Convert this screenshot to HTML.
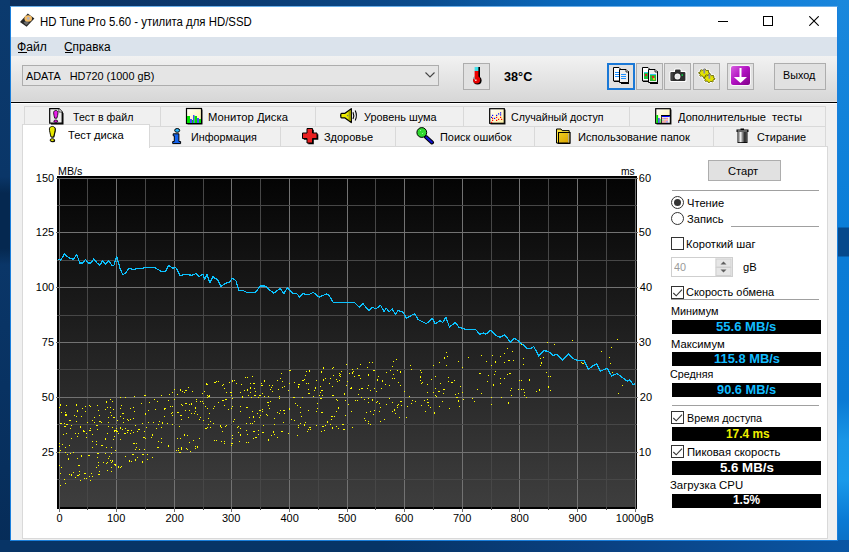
<!DOCTYPE html>
<html><head><meta charset="utf-8">
<style>
*{margin:0;padding:0;box-sizing:border-box}
html,body{width:849px;height:552px;overflow:hidden}
body{position:relative;font-family:"Liberation Sans",sans-serif;font-size:12px;color:#000;background:#073a72}
.a{position:absolute}
.win{position:absolute;left:10px;top:6px;width:828px;height:535px;background:#f0f0f0;border:1px solid #1a7fdc;border-top-color:#6aaee8}
.title{position:absolute;left:11px;top:7px;width:826px;height:30px;background:#fff}
.menu{position:absolute;left:11px;top:37px;width:826px;height:19px;background:#dbe3ec}
.tool{position:absolute;left:11px;top:56px;width:826px;height:46px;background:linear-gradient(#f2f2f2,#d6d6d6)}
.t11{position:absolute;font-size:11px;line-height:13px;white-space:nowrap}
.t12{position:absolute;font-size:12px;line-height:14px;white-space:nowrap}
.btn{position:absolute;background:#e1e1e1;border:1px solid #adadad}
.yl{position:absolute;left:20px;width:34px;text-align:right;font-size:11px;line-height:13px}
.yr{position:absolute;left:640px;font-size:11px;line-height:13px}
.xl{position:absolute;top:511px;width:60px;text-align:center;font-size:11px;line-height:13px}
.tab{position:absolute;background:#f0f0f0;border:1px solid #d9d9d9;font-size:12px;line-height:14px;white-space:nowrap}
.box{position:absolute;left:672px;width:149px;height:14px;background:#000;color:#0ac0ff;font-weight:bold;font-size:12px;line-height:14px;text-align:center}
.cb{position:absolute;left:671px;width:13px;height:13px;border:1px solid #333;background:#fff}
.sep{position:absolute;height:1px;background:#a0a0a0}
.tx{position:absolute;line-height:14px;white-space:nowrap;transform-origin:0 0}
</style></head><body>
<div class="a" style="left:0;top:0;width:849px;height:7px;background:linear-gradient(90deg,#0a2e5c 0%,#0b3c74 30%,#0b4c8e 50%,#0a66b8 65%,#0a78d4 80%,#1a86dc 100%)"></div>
<div class="a" style="left:0;top:0;width:10px;height:552px;background:linear-gradient(180deg,#0b3a6e 0%,#0a3668 32%,#052850 35%,#052850 45%,#0a3668 48%,#083262 70%,#062c58 100%)"></div>
<div class="a" style="left:837px;top:0;width:12px;height:552px;background:linear-gradient(180deg,#1a88dc 0px,#0a7ed8 227px,#05498c 228px,#05498c 256px,#0a7cd6 257px,#0a7ad4 400px,#1a96e6 440px,#1a9aea 480px,#0a7ad4 520px,#0a6cc0 552px)"></div>
<div class="a" style="left:0;top:540px;width:849px;height:12px;background:linear-gradient(90deg,#083466 0%,#063466 45%,#0a4080 70%,#0a56a4 100%)"></div>
<div class="win"></div>
<div class="title"></div>
<!-- caption buttons -->
<div class="a" style="left:718px;top:21px;width:10px;height:1px;background:#000"></div>
<div class="a" style="left:763px;top:16px;width:10px;height:10px;border:1px solid #000"></div>
<svg class="a" style="left:809px;top:16px" width="10" height="10" viewBox="0 0 10 10"><path d="M0.3 0.3 L9.7 9.7 M9.7 0.3 L0.3 9.7" stroke="#000" stroke-width="1.1"/></svg>

<div class="menu"></div>
<div class="a" style="left:18px;top:52px;width:9px;height:1px;background:#000"></div>
<div class="a" style="left:65px;top:52px;width:8px;height:1px;background:#000"></div>

<div class="tool"></div>
<!-- combo -->
<div class="a" style="left:22px;top:65px;width:417px;height:21px;background:#e5e5e5;border:1px solid #adadad"></div>
<svg class="a" style="left:425px;top:72px" width="10" height="6" viewBox="0 0 10 6"><path d="M0.5 0.5 L5 5 L9.5 0.5" fill="none" stroke="#444" stroke-width="1.1"/></svg>
<!-- thermometer -->
<div class="btn" style="left:463px;top:63px;width:27px;height:27px"></div>
<!-- toolbar buttons -->
<div class="btn" style="left:607px;top:63px;width:28px;height:27px;border:2px solid #1a78d6"></div>
<div class="btn" style="left:636px;top:63px;width:27px;height:27px"></div>
<div class="btn" style="left:664px;top:63px;width:27px;height:27px"></div>
<div class="btn" style="left:693px;top:63px;width:27px;height:27px"></div>
<div class="btn" style="left:727px;top:63px;width:27px;height:27px"></div>
<div class="btn" style="left:774px;top:63px;width:52px;height:27px"></div>

<div class="a" style="left:11px;top:101px;width:826px;height:1px;background:#e3e3e3"></div>
<div class="a" style="left:11px;top:102px;width:826px;height:1px;background:#000"></div>
<div class="a" style="left:11px;top:103px;width:826px;height:1px;background:#fff"></div>

<!-- tabs upper row -->
<div class="tab" style="left:24px;top:106px;width:137px;height:21px"></div>
<div class="tab" style="left:160px;top:106px;width:156px;height:21px"></div>
<div class="tab" style="left:315px;top:106px;width:149px;height:21px"></div>
<div class="tab" style="left:463px;top:106px;width:167px;height:21px"></div>
<div class="tab" style="left:629px;top:106px;width:197px;height:21px"></div>
<!-- tabs lower row -->
<div class="tab" style="left:149px;top:126px;width:132px;height:21px"></div>
<div class="tab" style="left:280px;top:126px;width:116px;height:21px"></div>
<div class="tab" style="left:395px;top:126px;width:140px;height:21px"></div>
<div class="tab" style="left:534px;top:126px;width:180px;height:21px"></div>
<div class="tab" style="left:713px;top:126px;width:113px;height:21px"></div>
<!-- panel -->
<div class="a" style="left:22px;top:146px;width:806px;height:393px;background:#fff;border:1px solid #d9d9d9"></div>
<div class="a" style="left:22px;top:124px;width:128px;height:24px;background:#fff;border:1px solid #d9d9d9;border-bottom:none"></div>

<svg class="chart" width="849" height="552" viewBox="0 0 849 552" style="position:absolute;left:0;top:0" shape-rendering="crispEdges">
<defs><linearGradient id="gbg" x1="0" y1="0" x2="0" y2="1"><stop offset="0" stop-color="#040404"/><stop offset="1" stop-color="#3e3e3e"/></linearGradient></defs>
<rect x="57" y="176" width="580" height="333" fill="#000"/>
<rect x="59" y="178" width="576" height="329" fill="url(#gbg)"/>
<rect x="59" y="178" width="1" height="334" fill="#727272"/>
<rect x="87" y="178" width="1" height="332" fill="#474747"/>
<rect x="116" y="178" width="1" height="334" fill="#727272"/>
<rect x="145" y="178" width="1" height="332" fill="#474747"/>
<rect x="174" y="178" width="1" height="334" fill="#727272"/>
<rect x="203" y="178" width="1" height="332" fill="#474747"/>
<rect x="231" y="178" width="1" height="334" fill="#727272"/>
<rect x="260" y="178" width="1" height="332" fill="#474747"/>
<rect x="289" y="178" width="1" height="334" fill="#727272"/>
<rect x="318" y="178" width="1" height="332" fill="#474747"/>
<rect x="347" y="178" width="1" height="334" fill="#727272"/>
<rect x="375" y="178" width="1" height="332" fill="#474747"/>
<rect x="404" y="178" width="1" height="334" fill="#727272"/>
<rect x="433" y="178" width="1" height="332" fill="#474747"/>
<rect x="462" y="178" width="1" height="334" fill="#727272"/>
<rect x="491" y="178" width="1" height="332" fill="#474747"/>
<rect x="519" y="178" width="1" height="334" fill="#727272"/>
<rect x="548" y="178" width="1" height="332" fill="#474747"/>
<rect x="577" y="178" width="1" height="334" fill="#727272"/>
<rect x="606" y="178" width="1" height="332" fill="#474747"/>
<rect x="635" y="178" width="1" height="334" fill="#727272"/>
<rect x="56" y="178" width="582" height="1" fill="#727272"/>
<rect x="57" y="205" width="580" height="1" fill="#474747"/>
<rect x="56" y="232" width="582" height="1" fill="#727272"/>
<rect x="57" y="260" width="580" height="1" fill="#474747"/>
<rect x="56" y="287" width="582" height="1" fill="#727272"/>
<rect x="57" y="315" width="580" height="1" fill="#474747"/>
<rect x="56" y="342" width="582" height="1" fill="#727272"/>
<rect x="57" y="369" width="580" height="1" fill="#474747"/>
<rect x="56" y="397" width="582" height="1" fill="#727272"/>
<rect x="57" y="424" width="580" height="1" fill="#474747"/>
<rect x="56" y="452" width="582" height="1" fill="#727272"/>
<rect x="57" y="479" width="580" height="1" fill="#474747"/>
<rect x="74" y="415" width="1" height="1" fill="#ffff00"/>
<rect x="90" y="406" width="1" height="1" fill="#ffff00"/>
<rect x="84" y="431" width="1" height="1" fill="#ffff00"/>
<rect x="60" y="450" width="1" height="1" fill="#ffff00"/>
<rect x="59" y="443" width="1" height="1" fill="#ffff00"/>
<rect x="61" y="412" width="1" height="1" fill="#ffff00"/>
<rect x="79" y="471" width="1" height="1" fill="#ffff00"/>
<rect x="64" y="423" width="1" height="1" fill="#ffff00"/>
<rect x="89" y="476" width="1" height="1" fill="#ffff00"/>
<rect x="86" y="433" width="1" height="1" fill="#ffff00"/>
<rect x="106" y="401" width="1" height="2" fill="#ffff00"/>
<rect x="100" y="421" width="1" height="1" fill="#ffff00"/>
<rect x="65" y="414" width="1" height="2" fill="#ffff00"/>
<rect x="73" y="472" width="1" height="1" fill="#ffff00"/>
<rect x="67" y="454" width="1" height="1" fill="#ffff00"/>
<rect x="89" y="430" width="2" height="1" fill="#ffff00"/>
<rect x="85" y="406" width="1" height="1" fill="#ffff00"/>
<rect x="60" y="423" width="1" height="1" fill="#ffff00"/>
<rect x="92" y="434" width="1" height="1" fill="#ffff00"/>
<rect x="73" y="452" width="1" height="1" fill="#ffff00"/>
<rect x="80" y="426" width="1" height="2" fill="#ffff00"/>
<rect x="97" y="453" width="2" height="1" fill="#ffff00"/>
<rect x="70" y="453" width="1" height="1" fill="#ffff00"/>
<rect x="84" y="473" width="2" height="1" fill="#ffff00"/>
<rect x="94" y="422" width="1" height="1" fill="#ffff00"/>
<rect x="107" y="407" width="1" height="1" fill="#ffff00"/>
<rect x="78" y="465" width="2" height="1" fill="#ffff00"/>
<rect x="65" y="447" width="1" height="1" fill="#ffff00"/>
<rect x="59" y="465" width="1" height="1" fill="#ffff00"/>
<rect x="96" y="444" width="1" height="1" fill="#ffff00"/>
<rect x="101" y="422" width="1" height="1" fill="#ffff00"/>
<rect x="92" y="447" width="1" height="1" fill="#ffff00"/>
<rect x="86" y="437" width="1" height="1" fill="#ffff00"/>
<rect x="99" y="471" width="1" height="1" fill="#ffff00"/>
<rect x="81" y="456" width="1" height="1" fill="#ffff00"/>
<rect x="61" y="467" width="1" height="1" fill="#ffff00"/>
<rect x="90" y="480" width="1" height="1" fill="#ffff00"/>
<rect x="99" y="421" width="1" height="1" fill="#ffff00"/>
<rect x="77" y="458" width="1" height="1" fill="#ffff00"/>
<rect x="59" y="446" width="1" height="1" fill="#ffff00"/>
<rect x="66" y="414" width="1" height="1" fill="#ffff00"/>
<rect x="60" y="473" width="1" height="1" fill="#ffff00"/>
<rect x="64" y="426" width="1" height="1" fill="#ffff00"/>
<rect x="77" y="475" width="2" height="1" fill="#ffff00"/>
<rect x="62" y="444" width="1" height="1" fill="#ffff00"/>
<rect x="85" y="473" width="1" height="1" fill="#ffff00"/>
<rect x="98" y="465" width="1" height="1" fill="#ffff00"/>
<rect x="71" y="438" width="1" height="1" fill="#ffff00"/>
<rect x="75" y="477" width="1" height="1" fill="#ffff00"/>
<rect x="105" y="409" width="1" height="1" fill="#ffff00"/>
<rect x="66" y="424" width="2" height="1" fill="#ffff00"/>
<rect x="69" y="445" width="1" height="1" fill="#ffff00"/>
<rect x="87" y="422" width="1" height="1" fill="#ffff00"/>
<rect x="78" y="433" width="1" height="1" fill="#ffff00"/>
<rect x="86" y="478" width="1" height="1" fill="#ffff00"/>
<rect x="92" y="441" width="1" height="1" fill="#ffff00"/>
<rect x="88" y="455" width="2" height="1" fill="#ffff00"/>
<rect x="60" y="485" width="1" height="1" fill="#ffff00"/>
<rect x="96" y="467" width="1" height="1" fill="#ffff00"/>
<rect x="97" y="429" width="1" height="1" fill="#ffff00"/>
<rect x="77" y="410" width="1" height="2" fill="#ffff00"/>
<rect x="89" y="405" width="1" height="1" fill="#ffff00"/>
<rect x="61" y="423" width="1" height="1" fill="#ffff00"/>
<rect x="66" y="433" width="1" height="1" fill="#ffff00"/>
<rect x="60" y="404" width="1" height="2" fill="#ffff00"/>
<rect x="65" y="412" width="1" height="1" fill="#ffff00"/>
<rect x="76" y="404" width="1" height="2" fill="#ffff00"/>
<rect x="101" y="445" width="2" height="1" fill="#ffff00"/>
<rect x="65" y="426" width="1" height="1" fill="#ffff00"/>
<rect x="75" y="433" width="1" height="1" fill="#ffff00"/>
<rect x="64" y="479" width="1" height="1" fill="#ffff00"/>
<rect x="107" y="433" width="1" height="1" fill="#ffff00"/>
<rect x="82" y="408" width="1" height="1" fill="#ffff00"/>
<rect x="63" y="434" width="1" height="1" fill="#ffff00"/>
<rect x="71" y="474" width="1" height="2" fill="#ffff00"/>
<rect x="66" y="405" width="1" height="1" fill="#ffff00"/>
<rect x="105" y="438" width="1" height="2" fill="#ffff00"/>
<rect x="65" y="452" width="1" height="1" fill="#ffff00"/>
<rect x="59" y="452" width="1" height="1" fill="#ffff00"/>
<rect x="106" y="463" width="1" height="1" fill="#ffff00"/>
<rect x="92" y="420" width="1" height="1" fill="#ffff00"/>
<rect x="76" y="416" width="1" height="1" fill="#ffff00"/>
<rect x="96" y="441" width="1" height="1" fill="#ffff00"/>
<rect x="96" y="425" width="1" height="1" fill="#ffff00"/>
<rect x="69" y="474" width="1" height="1" fill="#ffff00"/>
<rect x="107" y="462" width="1" height="1" fill="#ffff00"/>
<rect x="98" y="462" width="1" height="1" fill="#ffff00"/>
<rect x="94" y="417" width="1" height="1" fill="#ffff00"/>
<rect x="83" y="430" width="1" height="2" fill="#ffff00"/>
<rect x="59" y="407" width="1" height="1" fill="#ffff00"/>
<rect x="71" y="425" width="1" height="1" fill="#ffff00"/>
<rect x="92" y="476" width="1" height="1" fill="#ffff00"/>
<rect x="80" y="480" width="1" height="1" fill="#ffff00"/>
<rect x="107" y="470" width="1" height="1" fill="#ffff00"/>
<rect x="76" y="421" width="1" height="1" fill="#ffff00"/>
<rect x="69" y="420" width="2" height="1" fill="#ffff00"/>
<rect x="68" y="458" width="1" height="2" fill="#ffff00"/>
<rect x="103" y="462" width="1" height="1" fill="#ffff00"/>
<rect x="81" y="455" width="1" height="1" fill="#ffff00"/>
<rect x="97" y="405" width="1" height="1" fill="#ffff00"/>
<rect x="91" y="473" width="1" height="1" fill="#ffff00"/>
<rect x="97" y="457" width="1" height="1" fill="#ffff00"/>
<rect x="81" y="416" width="1" height="1" fill="#ffff00"/>
<rect x="97" y="425" width="1" height="1" fill="#ffff00"/>
<rect x="98" y="474" width="1" height="1" fill="#ffff00"/>
<rect x="77" y="436" width="1" height="1" fill="#ffff00"/>
<rect x="105" y="453" width="1" height="1" fill="#ffff00"/>
<rect x="66" y="414" width="1" height="2" fill="#ffff00"/>
<rect x="65" y="483" width="1" height="1" fill="#ffff00"/>
<rect x="98" y="410" width="1" height="1" fill="#ffff00"/>
<rect x="99" y="474" width="1" height="1" fill="#ffff00"/>
<rect x="90" y="428" width="1" height="1" fill="#ffff00"/>
<rect x="85" y="411" width="1" height="1" fill="#ffff00"/>
<rect x="106" y="447" width="1" height="1" fill="#ffff00"/>
<rect x="84" y="478" width="1" height="1" fill="#ffff00"/>
<rect x="79" y="474" width="1" height="1" fill="#ffff00"/>
<rect x="99" y="415" width="1" height="1" fill="#ffff00"/>
<rect x="70" y="428" width="1" height="1" fill="#ffff00"/>
<rect x="120" y="439" width="1" height="1" fill="#ffff00"/>
<rect x="120" y="427" width="1" height="2" fill="#ffff00"/>
<rect x="114" y="464" width="2" height="1" fill="#ffff00"/>
<rect x="125" y="428" width="1" height="1" fill="#ffff00"/>
<rect x="137" y="457" width="1" height="1" fill="#ffff00"/>
<rect x="129" y="461" width="1" height="1" fill="#ffff00"/>
<rect x="133" y="432" width="1" height="1" fill="#ffff00"/>
<rect x="134" y="396" width="1" height="1" fill="#ffff00"/>
<rect x="130" y="408" width="1" height="1" fill="#ffff00"/>
<rect x="108" y="458" width="1" height="1" fill="#ffff00"/>
<rect x="116" y="431" width="1" height="1" fill="#ffff00"/>
<rect x="144" y="431" width="1" height="1" fill="#ffff00"/>
<rect x="124" y="433" width="2" height="1" fill="#ffff00"/>
<rect x="135" y="449" width="1" height="1" fill="#ffff00"/>
<rect x="113" y="439" width="1" height="1" fill="#ffff00"/>
<rect x="120" y="416" width="1" height="1" fill="#ffff00"/>
<rect x="146" y="427" width="1" height="1" fill="#ffff00"/>
<rect x="136" y="447" width="1" height="1" fill="#ffff00"/>
<rect x="153" y="422" width="1" height="1" fill="#ffff00"/>
<rect x="138" y="429" width="1" height="1" fill="#ffff00"/>
<rect x="133" y="443" width="2" height="1" fill="#ffff00"/>
<rect x="130" y="433" width="1" height="1" fill="#ffff00"/>
<rect x="131" y="461" width="1" height="1" fill="#ffff00"/>
<rect x="142" y="454" width="2" height="1" fill="#ffff00"/>
<rect x="155" y="409" width="1" height="1" fill="#ffff00"/>
<rect x="135" y="460" width="1" height="1" fill="#ffff00"/>
<rect x="149" y="402" width="1" height="1" fill="#ffff00"/>
<rect x="114" y="430" width="1" height="2" fill="#ffff00"/>
<rect x="111" y="415" width="1" height="1" fill="#ffff00"/>
<rect x="111" y="447" width="1" height="1" fill="#ffff00"/>
<rect x="147" y="454" width="1" height="1" fill="#ffff00"/>
<rect x="115" y="450" width="1" height="1" fill="#ffff00"/>
<rect x="141" y="403" width="1" height="1" fill="#ffff00"/>
<rect x="152" y="457" width="1" height="1" fill="#ffff00"/>
<rect x="118" y="466" width="1" height="2" fill="#ffff00"/>
<rect x="127" y="430" width="2" height="1" fill="#ffff00"/>
<rect x="157" y="447" width="2" height="1" fill="#ffff00"/>
<rect x="116" y="428" width="1" height="1" fill="#ffff00"/>
<rect x="133" y="418" width="1" height="1" fill="#ffff00"/>
<rect x="117" y="420" width="1" height="1" fill="#ffff00"/>
<rect x="144" y="395" width="2" height="1" fill="#ffff00"/>
<rect x="135" y="425" width="1" height="1" fill="#ffff00"/>
<rect x="108" y="422" width="1" height="1" fill="#ffff00"/>
<rect x="139" y="429" width="1" height="1" fill="#ffff00"/>
<rect x="111" y="471" width="1" height="1" fill="#ffff00"/>
<rect x="147" y="459" width="1" height="1" fill="#ffff00"/>
<rect x="113" y="417" width="2" height="1" fill="#ffff00"/>
<rect x="109" y="456" width="1" height="1" fill="#ffff00"/>
<rect x="121" y="405" width="1" height="1" fill="#ffff00"/>
<rect x="129" y="460" width="1" height="1" fill="#ffff00"/>
<rect x="148" y="410" width="1" height="1" fill="#ffff00"/>
<rect x="115" y="465" width="1" height="1" fill="#ffff00"/>
<rect x="136" y="443" width="1" height="1" fill="#ffff00"/>
<rect x="112" y="401" width="1" height="1" fill="#ffff00"/>
<rect x="142" y="423" width="1" height="1" fill="#ffff00"/>
<rect x="111" y="467" width="1" height="1" fill="#ffff00"/>
<rect x="139" y="449" width="1" height="1" fill="#ffff00"/>
<rect x="112" y="461" width="1" height="1" fill="#ffff00"/>
<rect x="111" y="462" width="1" height="1" fill="#ffff00"/>
<rect x="130" y="419" width="1" height="1" fill="#ffff00"/>
<rect x="135" y="459" width="1" height="1" fill="#ffff00"/>
<rect x="121" y="405" width="1" height="1" fill="#ffff00"/>
<rect x="134" y="411" width="1" height="1" fill="#ffff00"/>
<rect x="113" y="409" width="1" height="1" fill="#ffff00"/>
<rect x="110" y="412" width="1" height="1" fill="#ffff00"/>
<rect x="123" y="418" width="1" height="1" fill="#ffff00"/>
<rect x="145" y="413" width="1" height="2" fill="#ffff00"/>
<rect x="133" y="407" width="1" height="1" fill="#ffff00"/>
<rect x="125" y="397" width="1" height="1" fill="#ffff00"/>
<rect x="120" y="397" width="1" height="1" fill="#ffff00"/>
<rect x="144" y="431" width="1" height="1" fill="#ffff00"/>
<rect x="117" y="431" width="1" height="1" fill="#ffff00"/>
<rect x="154" y="399" width="1" height="1" fill="#ffff00"/>
<rect x="148" y="422" width="1" height="1" fill="#ffff00"/>
<rect x="132" y="454" width="1" height="1" fill="#ffff00"/>
<rect x="127" y="432" width="1" height="1" fill="#ffff00"/>
<rect x="142" y="461" width="1" height="2" fill="#ffff00"/>
<rect x="125" y="456" width="1" height="1" fill="#ffff00"/>
<rect x="143" y="437" width="2" height="1" fill="#ffff00"/>
<rect x="128" y="420" width="1" height="1" fill="#ffff00"/>
<rect x="110" y="407" width="1" height="1" fill="#ffff00"/>
<rect x="111" y="453" width="1" height="1" fill="#ffff00"/>
<rect x="120" y="408" width="1" height="1" fill="#ffff00"/>
<rect x="112" y="460" width="1" height="1" fill="#ffff00"/>
<rect x="151" y="437" width="1" height="1" fill="#ffff00"/>
<rect x="122" y="413" width="1" height="1" fill="#ffff00"/>
<rect x="122" y="429" width="1" height="1" fill="#ffff00"/>
<rect x="115" y="430" width="2" height="1" fill="#ffff00"/>
<rect x="121" y="466" width="1" height="1" fill="#ffff00"/>
<rect x="156" y="428" width="1" height="1" fill="#ffff00"/>
<rect x="120" y="467" width="1" height="1" fill="#ffff00"/>
<rect x="123" y="422" width="1" height="1" fill="#ffff00"/>
<rect x="108" y="426" width="1" height="1" fill="#ffff00"/>
<rect x="131" y="430" width="1" height="1" fill="#ffff00"/>
<rect x="118" y="433" width="1" height="1" fill="#ffff00"/>
<rect x="108" y="417" width="1" height="1" fill="#ffff00"/>
<rect x="112" y="427" width="1" height="1" fill="#ffff00"/>
<rect x="110" y="399" width="1" height="1" fill="#ffff00"/>
<rect x="123" y="413" width="1" height="1" fill="#ffff00"/>
<rect x="137" y="431" width="1" height="1" fill="#ffff00"/>
<rect x="145" y="438" width="1" height="1" fill="#ffff00"/>
<rect x="143" y="454" width="1" height="1" fill="#ffff00"/>
<rect x="127" y="419" width="1" height="1" fill="#ffff00"/>
<rect x="157" y="401" width="1" height="1" fill="#ffff00"/>
<rect x="144" y="437" width="1" height="1" fill="#ffff00"/>
<rect x="110" y="460" width="1" height="1" fill="#ffff00"/>
<rect x="152" y="434" width="1" height="2" fill="#ffff00"/>
<rect x="144" y="449" width="1" height="1" fill="#ffff00"/>
<rect x="114" y="436" width="1" height="1" fill="#ffff00"/>
<rect x="133" y="454" width="1" height="1" fill="#ffff00"/>
<rect x="238" y="432" width="1" height="1" fill="#ffff00"/>
<rect x="216" y="440" width="1" height="1" fill="#ffff00"/>
<rect x="226" y="425" width="1" height="1" fill="#ffff00"/>
<rect x="180" y="389" width="1" height="1" fill="#ffff00"/>
<rect x="171" y="413" width="1" height="1" fill="#ffff00"/>
<rect x="168" y="445" width="1" height="1" fill="#ffff00"/>
<rect x="213" y="423" width="1" height="1" fill="#ffff00"/>
<rect x="220" y="426" width="1" height="1" fill="#ffff00"/>
<rect x="206" y="383" width="1" height="1" fill="#ffff00"/>
<rect x="237" y="427" width="1" height="1" fill="#ffff00"/>
<rect x="208" y="418" width="1" height="1" fill="#ffff00"/>
<rect x="223" y="384" width="1" height="1" fill="#ffff00"/>
<rect x="231" y="395" width="1" height="1" fill="#ffff00"/>
<rect x="165" y="408" width="1" height="1" fill="#ffff00"/>
<rect x="230" y="392" width="2" height="1" fill="#ffff00"/>
<rect x="231" y="443" width="2" height="1" fill="#ffff00"/>
<rect x="207" y="408" width="1" height="1" fill="#ffff00"/>
<rect x="205" y="428" width="2" height="1" fill="#ffff00"/>
<rect x="234" y="419" width="1" height="1" fill="#ffff00"/>
<rect x="222" y="385" width="1" height="1" fill="#ffff00"/>
<rect x="172" y="406" width="1" height="1" fill="#ffff00"/>
<rect x="232" y="398" width="1" height="1" fill="#ffff00"/>
<rect x="214" y="382" width="2" height="1" fill="#ffff00"/>
<rect x="164" y="408" width="1" height="2" fill="#ffff00"/>
<rect x="225" y="426" width="1" height="1" fill="#ffff00"/>
<rect x="225" y="399" width="2" height="1" fill="#ffff00"/>
<rect x="209" y="413" width="1" height="1" fill="#ffff00"/>
<rect x="204" y="391" width="1" height="1" fill="#ffff00"/>
<rect x="247" y="389" width="1" height="2" fill="#ffff00"/>
<rect x="255" y="437" width="2" height="1" fill="#ffff00"/>
<rect x="159" y="421" width="1" height="1" fill="#ffff00"/>
<rect x="239" y="441" width="1" height="1" fill="#ffff00"/>
<rect x="202" y="401" width="1" height="1" fill="#ffff00"/>
<rect x="178" y="450" width="1" height="1" fill="#ffff00"/>
<rect x="179" y="426" width="1" height="1" fill="#ffff00"/>
<rect x="172" y="424" width="1" height="1" fill="#ffff00"/>
<rect x="253" y="383" width="1" height="1" fill="#ffff00"/>
<rect x="240" y="411" width="1" height="1" fill="#ffff00"/>
<rect x="246" y="423" width="1" height="1" fill="#ffff00"/>
<rect x="181" y="447" width="1" height="1" fill="#ffff00"/>
<rect x="206" y="384" width="2" height="1" fill="#ffff00"/>
<rect x="158" y="424" width="1" height="1" fill="#ffff00"/>
<rect x="203" y="403" width="1" height="1" fill="#ffff00"/>
<rect x="172" y="412" width="1" height="1" fill="#ffff00"/>
<rect x="189" y="442" width="1" height="1" fill="#ffff00"/>
<rect x="158" y="441" width="1" height="1" fill="#ffff00"/>
<rect x="241" y="384" width="1" height="1" fill="#ffff00"/>
<rect x="250" y="423" width="1" height="1" fill="#ffff00"/>
<rect x="248" y="395" width="1" height="1" fill="#ffff00"/>
<rect x="195" y="411" width="1" height="1" fill="#ffff00"/>
<rect x="257" y="413" width="1" height="1" fill="#ffff00"/>
<rect x="194" y="413" width="1" height="1" fill="#ffff00"/>
<rect x="185" y="390" width="1" height="1" fill="#ffff00"/>
<rect x="168" y="445" width="1" height="2" fill="#ffff00"/>
<rect x="186" y="448" width="1" height="1" fill="#ffff00"/>
<rect x="182" y="405" width="1" height="1" fill="#ffff00"/>
<rect x="209" y="395" width="1" height="2" fill="#ffff00"/>
<rect x="195" y="448" width="1" height="1" fill="#ffff00"/>
<rect x="246" y="430" width="1" height="1" fill="#ffff00"/>
<rect x="221" y="441" width="1" height="1" fill="#ffff00"/>
<rect x="252" y="411" width="1" height="1" fill="#ffff00"/>
<rect x="229" y="382" width="1" height="1" fill="#ffff00"/>
<rect x="231" y="408" width="1" height="1" fill="#ffff00"/>
<rect x="233" y="421" width="1" height="1" fill="#ffff00"/>
<rect x="186" y="390" width="1" height="1" fill="#ffff00"/>
<rect x="250" y="383" width="1" height="1" fill="#ffff00"/>
<rect x="205" y="406" width="1" height="1" fill="#ffff00"/>
<rect x="187" y="435" width="1" height="1" fill="#ffff00"/>
<rect x="255" y="391" width="1" height="1" fill="#ffff00"/>
<rect x="223" y="400" width="1" height="1" fill="#ffff00"/>
<rect x="213" y="408" width="1" height="1" fill="#ffff00"/>
<rect x="174" y="399" width="1" height="1" fill="#ffff00"/>
<rect x="178" y="448" width="1" height="1" fill="#ffff00"/>
<rect x="207" y="397" width="1" height="1" fill="#ffff00"/>
<rect x="248" y="442" width="1" height="1" fill="#ffff00"/>
<rect x="202" y="393" width="1" height="1" fill="#ffff00"/>
<rect x="177" y="394" width="1" height="1" fill="#ffff00"/>
<rect x="192" y="391" width="1" height="1" fill="#ffff00"/>
<rect x="181" y="404" width="1" height="1" fill="#ffff00"/>
<rect x="214" y="440" width="1" height="1" fill="#ffff00"/>
<rect x="232" y="406" width="1" height="1" fill="#ffff00"/>
<rect x="199" y="419" width="1" height="1" fill="#ffff00"/>
<rect x="195" y="407" width="1" height="2" fill="#ffff00"/>
<rect x="164" y="409" width="1" height="1" fill="#ffff00"/>
<rect x="254" y="383" width="1" height="1" fill="#ffff00"/>
<rect x="208" y="424" width="1" height="1" fill="#ffff00"/>
<rect x="244" y="390" width="1" height="1" fill="#ffff00"/>
<rect x="185" y="403" width="2" height="1" fill="#ffff00"/>
<rect x="197" y="414" width="1" height="1" fill="#ffff00"/>
<rect x="253" y="431" width="2" height="1" fill="#ffff00"/>
<rect x="245" y="377" width="1" height="1" fill="#ffff00"/>
<rect x="161" y="438" width="1" height="1" fill="#ffff00"/>
<rect x="247" y="407" width="1" height="1" fill="#ffff00"/>
<rect x="216" y="381" width="1" height="1" fill="#ffff00"/>
<rect x="197" y="446" width="1" height="2" fill="#ffff00"/>
<rect x="240" y="434" width="1" height="2" fill="#ffff00"/>
<rect x="255" y="391" width="1" height="1" fill="#ffff00"/>
<rect x="168" y="400" width="1" height="1" fill="#ffff00"/>
<rect x="210" y="427" width="1" height="1" fill="#ffff00"/>
<rect x="252" y="423" width="1" height="1" fill="#ffff00"/>
<rect x="222" y="431" width="1" height="1" fill="#ffff00"/>
<rect x="203" y="420" width="1" height="1" fill="#ffff00"/>
<rect x="161" y="442" width="1" height="1" fill="#ffff00"/>
<rect x="181" y="448" width="1" height="2" fill="#ffff00"/>
<rect x="222" y="400" width="1" height="1" fill="#ffff00"/>
<rect x="170" y="406" width="1" height="1" fill="#ffff00"/>
<rect x="221" y="427" width="1" height="1" fill="#ffff00"/>
<rect x="169" y="394" width="1" height="1" fill="#ffff00"/>
<rect x="210" y="421" width="1" height="1" fill="#ffff00"/>
<rect x="196" y="399" width="1" height="1" fill="#ffff00"/>
<rect x="218" y="381" width="1" height="1" fill="#ffff00"/>
<rect x="188" y="417" width="1" height="1" fill="#ffff00"/>
<rect x="253" y="417" width="1" height="1" fill="#ffff00"/>
<rect x="246" y="407" width="1" height="1" fill="#ffff00"/>
<rect x="181" y="404" width="1" height="1" fill="#ffff00"/>
<rect x="254" y="421" width="1" height="1" fill="#ffff00"/>
<rect x="188" y="387" width="1" height="1" fill="#ffff00"/>
<rect x="207" y="427" width="1" height="1" fill="#ffff00"/>
<rect x="200" y="401" width="1" height="1" fill="#ffff00"/>
<rect x="224" y="441" width="1" height="1" fill="#ffff00"/>
<rect x="180" y="390" width="1" height="1" fill="#ffff00"/>
<rect x="191" y="413" width="1" height="1" fill="#ffff00"/>
<rect x="226" y="392" width="1" height="1" fill="#ffff00"/>
<rect x="237" y="427" width="1" height="1" fill="#ffff00"/>
<rect x="208" y="396" width="1" height="1" fill="#ffff00"/>
<rect x="254" y="395" width="2" height="1" fill="#ffff00"/>
<rect x="240" y="392" width="1" height="1" fill="#ffff00"/>
<rect x="180" y="438" width="1" height="1" fill="#ffff00"/>
<rect x="187" y="449" width="1" height="1" fill="#ffff00"/>
<rect x="207" y="395" width="1" height="1" fill="#ffff00"/>
<rect x="180" y="415" width="1" height="1" fill="#ffff00"/>
<rect x="224" y="443" width="1" height="1" fill="#ffff00"/>
<rect x="172" y="415" width="1" height="1" fill="#ffff00"/>
<rect x="179" y="452" width="2" height="1" fill="#ffff00"/>
<rect x="172" y="392" width="1" height="1" fill="#ffff00"/>
<rect x="164" y="416" width="1" height="1" fill="#ffff00"/>
<rect x="247" y="434" width="1" height="1" fill="#ffff00"/>
<rect x="231" y="445" width="1" height="1" fill="#ffff00"/>
<rect x="251" y="397" width="1" height="1" fill="#ffff00"/>
<rect x="176" y="450" width="1" height="1" fill="#ffff00"/>
<rect x="232" y="380" width="1" height="2" fill="#ffff00"/>
<rect x="224" y="405" width="1" height="1" fill="#ffff00"/>
<rect x="195" y="407" width="1" height="1" fill="#ffff00"/>
<rect x="174" y="389" width="1" height="1" fill="#ffff00"/>
<rect x="185" y="410" width="1" height="1" fill="#ffff00"/>
<rect x="253" y="383" width="1" height="1" fill="#ffff00"/>
<rect x="254" y="388" width="1" height="1" fill="#ffff00"/>
<rect x="193" y="440" width="1" height="1" fill="#ffff00"/>
<rect x="240" y="406" width="1" height="1" fill="#ffff00"/>
<rect x="162" y="422" width="1" height="2" fill="#ffff00"/>
<rect x="195" y="446" width="1" height="1" fill="#ffff00"/>
<rect x="177" y="412" width="2" height="1" fill="#ffff00"/>
<rect x="247" y="377" width="1" height="1" fill="#ffff00"/>
<rect x="199" y="438" width="1" height="1" fill="#ffff00"/>
<rect x="234" y="380" width="1" height="1" fill="#ffff00"/>
<rect x="161" y="395" width="1" height="1" fill="#ffff00"/>
<rect x="250" y="392" width="1" height="1" fill="#ffff00"/>
<rect x="232" y="438" width="1" height="1" fill="#ffff00"/>
<rect x="191" y="403" width="1" height="2" fill="#ffff00"/>
<rect x="253" y="416" width="1" height="1" fill="#ffff00"/>
<rect x="184" y="434" width="1" height="2" fill="#ffff00"/>
<rect x="189" y="404" width="1" height="1" fill="#ffff00"/>
<rect x="158" y="441" width="1" height="1" fill="#ffff00"/>
<rect x="249" y="417" width="1" height="1" fill="#ffff00"/>
<rect x="252" y="376" width="1" height="1" fill="#ffff00"/>
<rect x="181" y="419" width="1" height="1" fill="#ffff00"/>
<rect x="253" y="438" width="1" height="1" fill="#ffff00"/>
<rect x="196" y="401" width="1" height="1" fill="#ffff00"/>
<rect x="200" y="417" width="1" height="1" fill="#ffff00"/>
<rect x="250" y="387" width="1" height="2" fill="#ffff00"/>
<rect x="238" y="426" width="1" height="1" fill="#ffff00"/>
<rect x="240" y="428" width="1" height="1" fill="#ffff00"/>
<rect x="218" y="402" width="1" height="1" fill="#ffff00"/>
<rect x="189" y="410" width="1" height="1" fill="#ffff00"/>
<rect x="236" y="383" width="1" height="1" fill="#ffff00"/>
<rect x="177" y="438" width="1" height="1" fill="#ffff00"/>
<rect x="182" y="391" width="1" height="1" fill="#ffff00"/>
<rect x="161" y="427" width="1" height="1" fill="#ffff00"/>
<rect x="190" y="451" width="1" height="1" fill="#ffff00"/>
<rect x="246" y="442" width="1" height="1" fill="#ffff00"/>
<rect x="184" y="392" width="1" height="1" fill="#ffff00"/>
<rect x="167" y="423" width="1" height="1" fill="#ffff00"/>
<rect x="228" y="409" width="1" height="1" fill="#ffff00"/>
<rect x="181" y="415" width="1" height="1" fill="#ffff00"/>
<rect x="220" y="425" width="1" height="1" fill="#ffff00"/>
<rect x="232" y="435" width="1" height="1" fill="#ffff00"/>
<rect x="224" y="388" width="1" height="1" fill="#ffff00"/>
<rect x="242" y="396" width="1" height="2" fill="#ffff00"/>
<rect x="214" y="406" width="1" height="1" fill="#ffff00"/>
<rect x="231" y="392" width="1" height="1" fill="#ffff00"/>
<rect x="282" y="387" width="1" height="1" fill="#ffff00"/>
<rect x="273" y="431" width="1" height="2" fill="#ffff00"/>
<rect x="315" y="388" width="1" height="1" fill="#ffff00"/>
<rect x="297" y="435" width="1" height="1" fill="#ffff00"/>
<rect x="308" y="383" width="1" height="1" fill="#ffff00"/>
<rect x="338" y="407" width="1" height="2" fill="#ffff00"/>
<rect x="357" y="368" width="1" height="1" fill="#ffff00"/>
<rect x="305" y="422" width="1" height="1" fill="#ffff00"/>
<rect x="342" y="424" width="2" height="1" fill="#ffff00"/>
<rect x="262" y="393" width="1" height="1" fill="#ffff00"/>
<rect x="269" y="385" width="1" height="1" fill="#ffff00"/>
<rect x="355" y="400" width="1" height="1" fill="#ffff00"/>
<rect x="351" y="387" width="1" height="1" fill="#ffff00"/>
<rect x="344" y="393" width="1" height="2" fill="#ffff00"/>
<rect x="283" y="422" width="1" height="1" fill="#ffff00"/>
<rect x="352" y="369" width="1" height="1" fill="#ffff00"/>
<rect x="317" y="408" width="1" height="1" fill="#ffff00"/>
<rect x="279" y="396" width="1" height="1" fill="#ffff00"/>
<rect x="272" y="385" width="1" height="1" fill="#ffff00"/>
<rect x="283" y="410" width="2" height="1" fill="#ffff00"/>
<rect x="323" y="379" width="1" height="2" fill="#ffff00"/>
<rect x="259" y="395" width="2" height="1" fill="#ffff00"/>
<rect x="325" y="378" width="1" height="1" fill="#ffff00"/>
<rect x="289" y="383" width="1" height="1" fill="#ffff00"/>
<rect x="337" y="400" width="1" height="1" fill="#ffff00"/>
<rect x="264" y="380" width="1" height="2" fill="#ffff00"/>
<rect x="297" y="405" width="1" height="1" fill="#ffff00"/>
<rect x="321" y="372" width="1" height="1" fill="#ffff00"/>
<rect x="274" y="418" width="1" height="1" fill="#ffff00"/>
<rect x="298" y="387" width="1" height="1" fill="#ffff00"/>
<rect x="288" y="433" width="1" height="1" fill="#ffff00"/>
<rect x="289" y="408" width="1" height="2" fill="#ffff00"/>
<rect x="293" y="397" width="2" height="1" fill="#ffff00"/>
<rect x="344" y="429" width="1" height="1" fill="#ffff00"/>
<rect x="294" y="382" width="1" height="1" fill="#ffff00"/>
<rect x="330" y="378" width="1" height="1" fill="#ffff00"/>
<rect x="258" y="434" width="1" height="1" fill="#ffff00"/>
<rect x="300" y="423" width="1" height="1" fill="#ffff00"/>
<rect x="298" y="427" width="1" height="1" fill="#ffff00"/>
<rect x="304" y="379" width="1" height="1" fill="#ffff00"/>
<rect x="259" y="410" width="1" height="1" fill="#ffff00"/>
<rect x="322" y="426" width="2" height="1" fill="#ffff00"/>
<rect x="266" y="414" width="1" height="1" fill="#ffff00"/>
<rect x="295" y="403" width="1" height="1" fill="#ffff00"/>
<rect x="272" y="391" width="1" height="1" fill="#ffff00"/>
<rect x="310" y="429" width="1" height="1" fill="#ffff00"/>
<rect x="268" y="405" width="1" height="1" fill="#ffff00"/>
<rect x="338" y="428" width="1" height="1" fill="#ffff00"/>
<rect x="277" y="380" width="1" height="1" fill="#ffff00"/>
<rect x="352" y="427" width="1" height="1" fill="#ffff00"/>
<rect x="306" y="371" width="1" height="1" fill="#ffff00"/>
<rect x="350" y="388" width="2" height="1" fill="#ffff00"/>
<rect x="348" y="404" width="1" height="1" fill="#ffff00"/>
<rect x="340" y="374" width="1" height="1" fill="#ffff00"/>
<rect x="336" y="379" width="1" height="1" fill="#ffff00"/>
<rect x="298" y="425" width="1" height="1" fill="#ffff00"/>
<rect x="340" y="376" width="1" height="1" fill="#ffff00"/>
<rect x="279" y="398" width="1" height="1" fill="#ffff00"/>
<rect x="309" y="393" width="1" height="1" fill="#ffff00"/>
<rect x="270" y="389" width="1" height="1" fill="#ffff00"/>
<rect x="330" y="424" width="1" height="1" fill="#ffff00"/>
<rect x="262" y="411" width="1" height="1" fill="#ffff00"/>
<rect x="333" y="367" width="1" height="1" fill="#ffff00"/>
<rect x="341" y="371" width="1" height="1" fill="#ffff00"/>
<rect x="317" y="403" width="1" height="1" fill="#ffff00"/>
<rect x="320" y="386" width="1" height="1" fill="#ffff00"/>
<rect x="300" y="407" width="1" height="1" fill="#ffff00"/>
<rect x="300" y="412" width="1" height="1" fill="#ffff00"/>
<rect x="302" y="397" width="1" height="1" fill="#ffff00"/>
<rect x="260" y="415" width="1" height="1" fill="#ffff00"/>
<rect x="306" y="383" width="1" height="1" fill="#ffff00"/>
<rect x="334" y="416" width="1" height="1" fill="#ffff00"/>
<rect x="303" y="380" width="1" height="1" fill="#ffff00"/>
<rect x="305" y="375" width="1" height="1" fill="#ffff00"/>
<rect x="270" y="401" width="1" height="1" fill="#ffff00"/>
<rect x="267" y="402" width="2" height="1" fill="#ffff00"/>
<rect x="309" y="370" width="1" height="1" fill="#ffff00"/>
<rect x="321" y="371" width="1" height="1" fill="#ffff00"/>
<rect x="331" y="416" width="2" height="1" fill="#ffff00"/>
<rect x="309" y="371" width="1" height="1" fill="#ffff00"/>
<rect x="308" y="393" width="1" height="1" fill="#ffff00"/>
<rect x="353" y="371" width="1" height="1" fill="#ffff00"/>
<rect x="343" y="429" width="1" height="1" fill="#ffff00"/>
<rect x="331" y="419" width="1" height="1" fill="#ffff00"/>
<rect x="277" y="437" width="1" height="1" fill="#ffff00"/>
<rect x="307" y="431" width="1" height="1" fill="#ffff00"/>
<rect x="349" y="373" width="1" height="1" fill="#ffff00"/>
<rect x="336" y="426" width="1" height="1" fill="#ffff00"/>
<rect x="264" y="396" width="1" height="1" fill="#ffff00"/>
<rect x="333" y="375" width="1" height="1" fill="#ffff00"/>
<rect x="347" y="381" width="1" height="1" fill="#ffff00"/>
<rect x="339" y="373" width="1" height="1" fill="#ffff00"/>
<rect x="308" y="429" width="1" height="1" fill="#ffff00"/>
<rect x="278" y="389" width="1" height="1" fill="#ffff00"/>
<rect x="308" y="389" width="1" height="1" fill="#ffff00"/>
<rect x="261" y="385" width="2" height="1" fill="#ffff00"/>
<rect x="274" y="434" width="1" height="1" fill="#ffff00"/>
<rect x="325" y="425" width="1" height="1" fill="#ffff00"/>
<rect x="274" y="424" width="1" height="1" fill="#ffff00"/>
<rect x="269" y="408" width="1" height="1" fill="#ffff00"/>
<rect x="321" y="390" width="2" height="1" fill="#ffff00"/>
<rect x="345" y="400" width="1" height="1" fill="#ffff00"/>
<rect x="316" y="425" width="1" height="1" fill="#ffff00"/>
<rect x="268" y="439" width="1" height="2" fill="#ffff00"/>
<rect x="320" y="392" width="1" height="1" fill="#ffff00"/>
<rect x="337" y="381" width="1" height="1" fill="#ffff00"/>
<rect x="357" y="400" width="1" height="1" fill="#ffff00"/>
<rect x="294" y="420" width="1" height="1" fill="#ffff00"/>
<rect x="302" y="380" width="1" height="1" fill="#ffff00"/>
<rect x="332" y="368" width="1" height="1" fill="#ffff00"/>
<rect x="339" y="380" width="1" height="1" fill="#ffff00"/>
<rect x="321" y="431" width="1" height="1" fill="#ffff00"/>
<rect x="316" y="411" width="1" height="1" fill="#ffff00"/>
<rect x="289" y="370" width="2" height="1" fill="#ffff00"/>
<rect x="261" y="383" width="1" height="1" fill="#ffff00"/>
<rect x="319" y="395" width="1" height="1" fill="#ffff00"/>
<rect x="309" y="427" width="2" height="1" fill="#ffff00"/>
<rect x="271" y="387" width="1" height="1" fill="#ffff00"/>
<rect x="323" y="367" width="1" height="2" fill="#ffff00"/>
<rect x="258" y="397" width="1" height="1" fill="#ffff00"/>
<rect x="268" y="396" width="1" height="1" fill="#ffff00"/>
<rect x="280" y="410" width="1" height="1" fill="#ffff00"/>
<rect x="316" y="380" width="1" height="1" fill="#ffff00"/>
<rect x="320" y="398" width="2" height="1" fill="#ffff00"/>
<rect x="271" y="435" width="1" height="1" fill="#ffff00"/>
<rect x="282" y="381" width="1" height="1" fill="#ffff00"/>
<rect x="267" y="415" width="1" height="1" fill="#ffff00"/>
<rect x="345" y="415" width="1" height="1" fill="#ffff00"/>
<rect x="298" y="386" width="1" height="1" fill="#ffff00"/>
<rect x="259" y="417" width="1" height="1" fill="#ffff00"/>
<rect x="314" y="390" width="1" height="1" fill="#ffff00"/>
<rect x="322" y="395" width="1" height="1" fill="#ffff00"/>
<rect x="351" y="411" width="1" height="1" fill="#ffff00"/>
<rect x="282" y="431" width="1" height="1" fill="#ffff00"/>
<rect x="262" y="409" width="1" height="1" fill="#ffff00"/>
<rect x="298" y="384" width="2" height="1" fill="#ffff00"/>
<rect x="263" y="425" width="1" height="1" fill="#ffff00"/>
<rect x="259" y="410" width="2" height="1" fill="#ffff00"/>
<rect x="352" y="372" width="1" height="2" fill="#ffff00"/>
<rect x="277" y="412" width="1" height="1" fill="#ffff00"/>
<rect x="308" y="410" width="1" height="1" fill="#ffff00"/>
<rect x="339" y="375" width="1" height="1" fill="#ffff00"/>
<rect x="288" y="390" width="1" height="1" fill="#ffff00"/>
<rect x="262" y="432" width="2" height="1" fill="#ffff00"/>
<rect x="336" y="411" width="1" height="1" fill="#ffff00"/>
<rect x="258" y="430" width="1" height="1" fill="#ffff00"/>
<rect x="332" y="395" width="2" height="1" fill="#ffff00"/>
<rect x="332" y="395" width="1" height="1" fill="#ffff00"/>
<rect x="280" y="378" width="1" height="1" fill="#ffff00"/>
<rect x="281" y="373" width="1" height="1" fill="#ffff00"/>
<rect x="291" y="419" width="1" height="1" fill="#ffff00"/>
<rect x="327" y="421" width="1" height="1" fill="#ffff00"/>
<rect x="329" y="383" width="1" height="1" fill="#ffff00"/>
<rect x="313" y="396" width="1" height="1" fill="#ffff00"/>
<rect x="336" y="399" width="1" height="1" fill="#ffff00"/>
<rect x="284" y="413" width="1" height="1" fill="#ffff00"/>
<rect x="354" y="376" width="1" height="1" fill="#ffff00"/>
<rect x="346" y="364" width="1" height="1" fill="#ffff00"/>
<rect x="284" y="386" width="1" height="1" fill="#ffff00"/>
<rect x="332" y="427" width="1" height="2" fill="#ffff00"/>
<rect x="332" y="386" width="1" height="1" fill="#ffff00"/>
<rect x="346" y="385" width="1" height="1" fill="#ffff00"/>
<rect x="281" y="431" width="1" height="1" fill="#ffff00"/>
<rect x="321" y="412" width="2" height="1" fill="#ffff00"/>
<rect x="324" y="430" width="1" height="1" fill="#ffff00"/>
<rect x="304" y="424" width="1" height="2" fill="#ffff00"/>
<rect x="327" y="422" width="1" height="1" fill="#ffff00"/>
<rect x="301" y="416" width="1" height="1" fill="#ffff00"/>
<rect x="315" y="387" width="1" height="1" fill="#ffff00"/>
<rect x="279" y="413" width="1" height="1" fill="#ffff00"/>
<rect x="365" y="420" width="1" height="1" fill="#ffff00"/>
<rect x="372" y="362" width="1" height="1" fill="#ffff00"/>
<rect x="368" y="421" width="1" height="1" fill="#ffff00"/>
<rect x="392" y="366" width="1" height="1" fill="#ffff00"/>
<rect x="360" y="364" width="1" height="1" fill="#ffff00"/>
<rect x="427" y="392" width="1" height="1" fill="#ffff00"/>
<rect x="427" y="399" width="1" height="1" fill="#ffff00"/>
<rect x="364" y="399" width="1" height="1" fill="#ffff00"/>
<rect x="394" y="409" width="1" height="2" fill="#ffff00"/>
<rect x="439" y="406" width="1" height="1" fill="#ffff00"/>
<rect x="364" y="418" width="1" height="1" fill="#ffff00"/>
<rect x="449" y="408" width="1" height="1" fill="#ffff00"/>
<rect x="368" y="374" width="1" height="1" fill="#ffff00"/>
<rect x="369" y="362" width="1" height="1" fill="#ffff00"/>
<rect x="442" y="401" width="1" height="1" fill="#ffff00"/>
<rect x="421" y="405" width="1" height="1" fill="#ffff00"/>
<rect x="421" y="372" width="1" height="1" fill="#ffff00"/>
<rect x="367" y="367" width="1" height="1" fill="#ffff00"/>
<rect x="433" y="365" width="1" height="1" fill="#ffff00"/>
<rect x="389" y="385" width="1" height="1" fill="#ffff00"/>
<rect x="360" y="378" width="1" height="1" fill="#ffff00"/>
<rect x="386" y="404" width="1" height="1" fill="#ffff00"/>
<rect x="394" y="378" width="1" height="1" fill="#ffff00"/>
<rect x="454" y="380" width="1" height="1" fill="#ffff00"/>
<rect x="443" y="389" width="2" height="1" fill="#ffff00"/>
<rect x="361" y="388" width="2" height="1" fill="#ffff00"/>
<rect x="401" y="405" width="1" height="1" fill="#ffff00"/>
<rect x="392" y="402" width="1" height="1" fill="#ffff00"/>
<rect x="411" y="369" width="1" height="1" fill="#ffff00"/>
<rect x="444" y="357" width="1" height="2" fill="#ffff00"/>
<rect x="439" y="362" width="1" height="1" fill="#ffff00"/>
<rect x="358" y="375" width="2" height="1" fill="#ffff00"/>
<rect x="434" y="412" width="1" height="2" fill="#ffff00"/>
<rect x="358" y="394" width="1" height="1" fill="#ffff00"/>
<rect x="407" y="406" width="1" height="1" fill="#ffff00"/>
<rect x="376" y="391" width="1" height="1" fill="#ffff00"/>
<rect x="392" y="411" width="1" height="1" fill="#ffff00"/>
<rect x="384" y="419" width="1" height="1" fill="#ffff00"/>
<rect x="386" y="372" width="1" height="1" fill="#ffff00"/>
<rect x="427" y="384" width="1" height="1" fill="#ffff00"/>
<rect x="368" y="402" width="1" height="1" fill="#ffff00"/>
<rect x="366" y="412" width="1" height="1" fill="#ffff00"/>
<rect x="427" y="402" width="2" height="1" fill="#ffff00"/>
<rect x="420" y="376" width="1" height="2" fill="#ffff00"/>
<rect x="398" y="382" width="1" height="1" fill="#ffff00"/>
<rect x="447" y="356" width="1" height="1" fill="#ffff00"/>
<rect x="446" y="352" width="1" height="1" fill="#ffff00"/>
<rect x="378" y="376" width="1" height="1" fill="#ffff00"/>
<rect x="448" y="381" width="1" height="1" fill="#ffff00"/>
<rect x="395" y="413" width="1" height="1" fill="#ffff00"/>
<rect x="381" y="388" width="1" height="1" fill="#ffff00"/>
<rect x="411" y="403" width="1" height="1" fill="#ffff00"/>
<rect x="433" y="392" width="1" height="1" fill="#ffff00"/>
<rect x="392" y="378" width="1" height="1" fill="#ffff00"/>
<rect x="373" y="414" width="1" height="1" fill="#ffff00"/>
<rect x="424" y="400" width="1" height="1" fill="#ffff00"/>
<rect x="374" y="388" width="1" height="1" fill="#ffff00"/>
<rect x="435" y="388" width="1" height="1" fill="#ffff00"/>
<rect x="370" y="390" width="1" height="1" fill="#ffff00"/>
<rect x="446" y="365" width="1" height="1" fill="#ffff00"/>
<rect x="377" y="379" width="1" height="2" fill="#ffff00"/>
<rect x="428" y="405" width="1" height="1" fill="#ffff00"/>
<rect x="373" y="370" width="2" height="1" fill="#ffff00"/>
<rect x="382" y="380" width="1" height="2" fill="#ffff00"/>
<rect x="410" y="365" width="1" height="1" fill="#ffff00"/>
<rect x="390" y="370" width="1" height="1" fill="#ffff00"/>
<rect x="455" y="394" width="1" height="1" fill="#ffff00"/>
<rect x="368" y="423" width="1" height="1" fill="#ffff00"/>
<rect x="368" y="385" width="1" height="1" fill="#ffff00"/>
<rect x="456" y="397" width="2" height="1" fill="#ffff00"/>
<rect x="431" y="379" width="1" height="1" fill="#ffff00"/>
<rect x="377" y="401" width="1" height="1" fill="#ffff00"/>
<rect x="368" y="374" width="1" height="2" fill="#ffff00"/>
<rect x="396" y="359" width="1" height="1" fill="#ffff00"/>
<rect x="397" y="407" width="1" height="1" fill="#ffff00"/>
<rect x="427" y="384" width="1" height="1" fill="#ffff00"/>
<rect x="421" y="383" width="1" height="1" fill="#ffff00"/>
<rect x="372" y="399" width="1" height="2" fill="#ffff00"/>
<rect x="398" y="404" width="1" height="1" fill="#ffff00"/>
<rect x="448" y="377" width="1" height="1" fill="#ffff00"/>
<rect x="415" y="401" width="1" height="1" fill="#ffff00"/>
<rect x="400" y="371" width="1" height="2" fill="#ffff00"/>
<rect x="430" y="407" width="1" height="1" fill="#ffff00"/>
<rect x="435" y="395" width="1" height="1" fill="#ffff00"/>
<rect x="443" y="393" width="1" height="1" fill="#ffff00"/>
<rect x="422" y="382" width="1" height="1" fill="#ffff00"/>
<rect x="389" y="398" width="1" height="1" fill="#ffff00"/>
<rect x="367" y="388" width="1" height="1" fill="#ffff00"/>
<rect x="436" y="396" width="1" height="1" fill="#ffff00"/>
<rect x="420" y="370" width="1" height="1" fill="#ffff00"/>
<rect x="400" y="385" width="1" height="1" fill="#ffff00"/>
<rect x="420" y="380" width="1" height="1" fill="#ffff00"/>
<rect x="425" y="411" width="1" height="1" fill="#ffff00"/>
<rect x="376" y="402" width="1" height="1" fill="#ffff00"/>
<rect x="435" y="376" width="1" height="1" fill="#ffff00"/>
<rect x="406" y="417" width="1" height="1" fill="#ffff00"/>
<rect x="361" y="397" width="1" height="1" fill="#ffff00"/>
<rect x="374" y="410" width="1" height="1" fill="#ffff00"/>
<rect x="452" y="382" width="1" height="1" fill="#ffff00"/>
<rect x="368" y="398" width="1" height="1" fill="#ffff00"/>
<rect x="412" y="400" width="1" height="1" fill="#ffff00"/>
<rect x="409" y="396" width="1" height="1" fill="#ffff00"/>
<rect x="440" y="383" width="1" height="1" fill="#ffff00"/>
<rect x="399" y="417" width="1" height="1" fill="#ffff00"/>
<rect x="379" y="403" width="1" height="1" fill="#ffff00"/>
<rect x="397" y="405" width="1" height="1" fill="#ffff00"/>
<rect x="370" y="424" width="1" height="1" fill="#ffff00"/>
<rect x="393" y="361" width="1" height="1" fill="#ffff00"/>
<rect x="385" y="384" width="1" height="1" fill="#ffff00"/>
<rect x="359" y="389" width="1" height="1" fill="#ffff00"/>
<rect x="400" y="401" width="2" height="1" fill="#ffff00"/>
<rect x="393" y="374" width="1" height="1" fill="#ffff00"/>
<rect x="380" y="407" width="1" height="1" fill="#ffff00"/>
<rect x="451" y="382" width="1" height="1" fill="#ffff00"/>
<rect x="379" y="411" width="1" height="1" fill="#ffff00"/>
<rect x="397" y="370" width="1" height="1" fill="#ffff00"/>
<rect x="370" y="411" width="1" height="1" fill="#ffff00"/>
<rect x="438" y="391" width="2" height="1" fill="#ffff00"/>
<rect x="404" y="391" width="1" height="1" fill="#ffff00"/>
<rect x="380" y="421" width="1" height="1" fill="#ffff00"/>
<rect x="493" y="384" width="1" height="2" fill="#ffff00"/>
<rect x="539" y="389" width="1" height="2" fill="#ffff00"/>
<rect x="504" y="362" width="1" height="1" fill="#ffff00"/>
<rect x="512" y="351" width="1" height="1" fill="#ffff00"/>
<rect x="541" y="362" width="1" height="2" fill="#ffff00"/>
<rect x="543" y="357" width="1" height="1" fill="#ffff00"/>
<rect x="495" y="361" width="1" height="2" fill="#ffff00"/>
<rect x="500" y="356" width="1" height="1" fill="#ffff00"/>
<rect x="458" y="393" width="1" height="1" fill="#ffff00"/>
<rect x="486" y="361" width="1" height="1" fill="#ffff00"/>
<rect x="488" y="375" width="1" height="1" fill="#ffff00"/>
<rect x="500" y="383" width="1" height="1" fill="#ffff00"/>
<rect x="523" y="364" width="1" height="1" fill="#ffff00"/>
<rect x="550" y="390" width="1" height="1" fill="#ffff00"/>
<rect x="463" y="399" width="1" height="1" fill="#ffff00"/>
<rect x="548" y="386" width="1" height="1" fill="#ffff00"/>
<rect x="472" y="398" width="1" height="1" fill="#ffff00"/>
<rect x="521" y="344" width="1" height="1" fill="#ffff00"/>
<rect x="459" y="406" width="1" height="1" fill="#ffff00"/>
<rect x="523" y="358" width="1" height="1" fill="#ffff00"/>
<rect x="468" y="357" width="1" height="1" fill="#ffff00"/>
<rect x="481" y="393" width="1" height="1" fill="#ffff00"/>
<rect x="492" y="355" width="1" height="1" fill="#ffff00"/>
<rect x="548" y="387" width="1" height="1" fill="#ffff00"/>
<rect x="474" y="401" width="1" height="1" fill="#ffff00"/>
<rect x="518" y="389" width="1" height="1" fill="#ffff00"/>
<rect x="524" y="395" width="1" height="1" fill="#ffff00"/>
<rect x="536" y="391" width="1" height="1" fill="#ffff00"/>
<rect x="477" y="389" width="1" height="1" fill="#ffff00"/>
<rect x="511" y="388" width="1" height="1" fill="#ffff00"/>
<rect x="501" y="397" width="1" height="1" fill="#ffff00"/>
<rect x="513" y="360" width="1" height="1" fill="#ffff00"/>
<rect x="481" y="355" width="1" height="1" fill="#ffff00"/>
<rect x="507" y="348" width="1" height="1" fill="#ffff00"/>
<rect x="504" y="353" width="1" height="1" fill="#ffff00"/>
<rect x="507" y="374" width="1" height="1" fill="#ffff00"/>
<rect x="511" y="395" width="1" height="1" fill="#ffff00"/>
<rect x="458" y="400" width="1" height="2" fill="#ffff00"/>
<rect x="504" y="378" width="1" height="1" fill="#ffff00"/>
<rect x="524" y="392" width="1" height="1" fill="#ffff00"/>
<rect x="495" y="371" width="1" height="1" fill="#ffff00"/>
<rect x="554" y="344" width="1" height="1" fill="#ffff00"/>
<rect x="521" y="380" width="1" height="1" fill="#ffff00"/>
<rect x="460" y="386" width="1" height="1" fill="#ffff00"/>
<rect x="526" y="397" width="1" height="1" fill="#ffff00"/>
<rect x="491" y="404" width="1" height="1" fill="#ffff00"/>
<rect x="509" y="373" width="2" height="1" fill="#ffff00"/>
<rect x="547" y="342" width="1" height="1" fill="#ffff00"/>
<rect x="529" y="379" width="1" height="2" fill="#ffff00"/>
<rect x="491" y="397" width="1" height="1" fill="#ffff00"/>
<rect x="494" y="374" width="1" height="1" fill="#ffff00"/>
<rect x="510" y="390" width="1" height="1" fill="#ffff00"/>
<rect x="479" y="373" width="2" height="1" fill="#ffff00"/>
<rect x="500" y="378" width="1" height="1" fill="#ffff00"/>
<rect x="540" y="358" width="1" height="1" fill="#ffff00"/>
<rect x="540" y="365" width="1" height="1" fill="#ffff00"/>
<rect x="508" y="360" width="2" height="1" fill="#ffff00"/>
<rect x="508" y="402" width="1" height="2" fill="#ffff00"/>
<rect x="523" y="389" width="1" height="1" fill="#ffff00"/>
<rect x="491" y="365" width="1" height="1" fill="#ffff00"/>
<rect x="487" y="381" width="1" height="1" fill="#ffff00"/>
<rect x="521" y="389" width="1" height="1" fill="#ffff00"/>
<rect x="462" y="392" width="1" height="1" fill="#ffff00"/>
<rect x="546" y="372" width="1" height="1" fill="#ffff00"/>
<rect x="462" y="367" width="1" height="1" fill="#ffff00"/>
<rect x="458" y="361" width="1" height="1" fill="#ffff00"/>
<rect x="550" y="376" width="1" height="1" fill="#ffff00"/>
<rect x="523" y="389" width="1" height="1" fill="#ffff00"/>
<rect x="548" y="376" width="1" height="1" fill="#ffff00"/>
<rect x="519" y="380" width="1" height="1" fill="#ffff00"/>
<rect x="612" y="372" width="1" height="1" fill="#ffff00"/>
<rect x="611" y="347" width="1" height="1" fill="#ffff00"/>
<rect x="610" y="363" width="1" height="1" fill="#ffff00"/>
<rect x="617" y="339" width="1" height="1" fill="#ffff00"/>
<rect x="572" y="340" width="1" height="1" fill="#ffff00"/>
<rect x="618" y="393" width="1" height="1" fill="#ffff00"/>
<rect x="609" y="357" width="1" height="1" fill="#ffff00"/>
<rect x="622" y="385" width="1" height="1" fill="#ffff00"/>
<rect x="601" y="351" width="1" height="1" fill="#ffff00"/>
<rect x="581" y="362" width="1" height="1" fill="#ffff00"/>
<rect x="582" y="363" width="2" height="1" fill="#ffff00"/>
</svg>
<svg width="849" height="552" style="position:absolute;left:0;top:0"><polyline fill="none" stroke="#0cc2ff" stroke-width="1.2" shape-rendering="crispEdges" stroke-linejoin="round" points="58.5,259.4 60.9,260.2 64.4,253.6 66.8,256.4 70.3,258.3 73.4,259.4 76.7,254.3 79.7,263.0 82.8,263.0 85.6,259.4 88.0,263.0 90.8,263.0 93.9,258.7 96.9,263.0 99.8,265.3 102.6,260.6 105.6,264.2 108.7,261.1 112.0,265.3 113.9,265.3 116.7,256.4 119.8,267.7 122.8,274.8 125.7,272.9 129.2,268.2 133.9,269.6 137.4,268.2 141.0,268.9 144.5,267.7 149.2,267.2 154.0,267.2 161.0,271.2 165.7,271.2 168.5,265.3 172.8,268.2 175.6,267.2 180.3,275.9 184.6,274.3 191.6,275.2 196.3,273.6 199.2,276.6 202.9,274.3 204.6,279.5 206.9,274.3 210.0,283.0 212.8,276.6 217.5,279.9 221.1,286.5 224.6,283.7 229.3,282.3 232.1,278.3 235.9,280.6 238.7,290.0 243.5,290.8 247.0,292.4 255.6,292.4 260.3,286.0 265.0,286.0 269.7,290.0 273.7,293.1 280.3,288.4 283.9,293.6 287.4,287.7 293.3,293.6 296.8,293.6 299.7,297.1 302.7,293.6 308.6,294.7 313.3,292.4 319.2,297.1 326.3,294.0 328.6,294.7 333.3,302.5 354.5,302.5 359.3,307.2 362.8,303.5 368.7,310.5 372.2,307.2 375.7,308.9 380.5,305.3 384.0,311.2 386.3,308.2 389.2,311.9 392.2,308.9 395.3,314.3 398.1,310.5 402.8,311.9 406.4,318.3 414.6,313.6 418.1,319.5 426.4,323.7 432.3,318.3 435.3,323.7 440.0,320.7 442.8,322.4 445.9,317.0 449.4,327.1 455.3,322.4 458.8,327.1 465.9,329.4 475.3,329.4 480.0,334.2 483.6,333.0 485.9,334.2 490.6,330.2 496.5,335.8 500.1,337.2 504.8,334.9 510.7,342.4 514.2,338.2 517.7,340.5 523.6,345.2 527.2,348.3 530.7,348.3 533.8,346.6 538.9,356.1 543.7,350.6 548.4,351.4 553.1,355.4 556.6,354.2 562.5,360.1 568.4,353.7 574.3,359.4 579.0,360.8 583.7,360.1 588.4,369.5 591.9,366.4 596.7,363.6 600.2,371.1 607.3,368.3 611.5,375.9 617.1,373.5 622.6,377.7 627.3,381.3 629.6,379.6 633.2,384.8 635.0,383.6"/></svg>
<div class="tx" style="left:35.80px;top:171.0px;font-size:11px">150</div>
<div class="tx" style="left:638.80px;top:171.0px;font-size:11px">60</div>
<div class="tx" style="left:35.80px;top:225.0px;font-size:11px">125</div>
<div class="tx" style="left:638.80px;top:225.0px;font-size:11px">50</div>
<div class="tx" style="left:35.80px;top:280.0px;font-size:11px">100</div>
<div class="tx" style="left:639.80px;top:280.0px;font-size:11px">40</div>
<div class="tx" style="left:41.80px;top:335.0px;font-size:11px">75</div>
<div class="tx" style="left:638.80px;top:335.0px;font-size:11px">30</div>
<div class="tx" style="left:41.80px;top:390.0px;font-size:11px">50</div>
<div class="tx" style="left:639.80px;top:390.0px;font-size:11px">20</div>
<div class="tx" style="left:41.80px;top:445.0px;font-size:11px">25</div>
<div class="tx" style="left:638.80px;top:445.0px;font-size:11px">10</div>
<div class="tx" style="left:56.50px;top:510.8px;font-size:11px">0</div>
<div class="tx" style="left:107.00px;top:510.8px;font-size:11px">100</div>
<div class="tx" style="left:165.50px;top:510.8px;font-size:11px">200</div>
<div class="tx" style="left:222.00px;top:510.8px;font-size:11px">300</div>
<div class="tx" style="left:280.50px;top:510.8px;font-size:11px">400</div>
<div class="tx" style="left:338.00px;top:510.8px;font-size:11px">500</div>
<div class="tx" style="left:395.00px;top:510.8px;font-size:11px">600</div>
<div class="tx" style="left:453.00px;top:510.8px;font-size:11px">700</div>
<div class="tx" style="left:510.50px;top:510.8px;font-size:11px">800</div>
<div class="tx" style="left:568.50px;top:510.8px;font-size:11px">900</div>
<div class="tx" style="left:615.80px;top:510.8px;font-size:11px">1000gB</div>

<!-- right panel -->
<div class="btn" style="left:708px;top:160px;width:73px;height:21px"></div>
<div class="sep" style="left:672px;top:190px;width:147px"></div>
<div class="a" style="left:671px;top:196px;width:13px;height:13px;border:1px solid #333;border-radius:50%;background:#fff"></div>
<div class="a" style="left:674px;top:199px;width:7px;height:7px;border-radius:50%;background:#333"></div>
<div class="a" style="left:671px;top:212px;width:13px;height:13px;border:1px solid #333;border-radius:50%;background:#fff"></div>
<div class="sep" style="left:731px;top:226px;width:88px"></div>
<div class="cb" style="top:237px"></div>
<div class="a" style="left:671px;top:257px;width:62px;height:20px;border:1px solid #cfcfcf;background:#fff"></div>
<div class="cb" style="top:286px"></div>
<div class="sep" style="left:671px;top:299px;width:148px"></div>
<div class="box" style="top:320px"></div>
<div class="box" style="top:352px"></div>
<div class="box" style="top:383px"></div>
<div class="sep" style="left:672px;top:405px;width:147px"></div>
<div class="cb" style="top:411px"></div>
<div class="box" style="top:427px"></div>
<div class="cb" style="top:445px"></div>
<div class="box" style="top:461px;color:#fff"></div>
<div class="box" style="top:494px"></div>
<!-- ICONS -->
<svg class="a" style="left:18px;top:12px" width="18" height="16" viewBox="18 12 18 16">
 <polygon points="27.8,13.6 34.4,18.5 26.6,26.8 20,22" fill="#262626"/>
 <polygon points="23.5,22.5 26.5,20.5 29,23 26.2,25.3" fill="#6a6a6a"/>
 <ellipse cx="28.2" cy="18.5" rx="3.8" ry="3.3" fill="#f2bc68"/>
 <circle cx="28.3" cy="18.4" r="1.3" fill="#aeb2c6"/>
</svg>
<svg class="a" style="left:468px;top:65px" width="16" height="22" viewBox="468 65 16 22">
 <rect x="475.5" y="67" width="4.5" height="13" fill="#000"/>
 <circle cx="477.5" cy="80.5" r="4.1" fill="#000"/>
 <rect x="474.6" y="67" width="3.8" height="4" fill="#3fe0ea"/>
 <rect x="474.6" y="71" width="3.8" height="8" fill="#ee0000"/>
 <circle cx="476.6" cy="79.8" r="3.6" fill="#e80000"/>
 <path d="M473.2 78.5 A3.6 3.6 0 0 1 474.6 76.8 L474.6 80 Z" fill="#5fe6f0"/>
 <rect x="475" y="79.6" width="1.6" height="1.2" fill="#fff"/>
</svg>
<!-- toolbar icon 1: docs -->
<svg class="a" style="left:610px;top:66px" width="22" height="20" viewBox="610 66 22 20">
 <rect x="614" y="69" width="7" height="13" fill="#000"/>
 <path d="M613.5 67.5 h5.5 l1.5 1.5 v12 h-7z" fill="#fff" stroke="#000" stroke-width="1"/>
 <rect x="615" y="72" width="4" height="1" fill="#1e90ff"/>
 <rect x="615" y="74" width="4" height="1" fill="#1e90ff"/>
 <rect x="615" y="76" width="4" height="1" fill="#1e90ff"/>
 <rect x="621" y="71" width="8" height="13" fill="#000"/>
 <path d="M619.5 69.5 h6.5 l2.5 2.5 v10.5 h-9z" fill="#eeeeee" stroke="#000" stroke-width="1"/>
 <path d="M626 69.5 v2.5 h2.5" fill="#fff" stroke="#000" stroke-width="0.8"/>
 <rect x="621" y="74" width="5" height="1" fill="#1e90ff"/>
 <rect x="621" y="76" width="5" height="1" fill="#1e90ff"/>
 <rect x="621" y="78" width="5" height="1" fill="#1e90ff"/>
</svg>
<!-- toolbar icon 2: docs w/ images -->
<svg class="a" style="left:639px;top:66px" width="22" height="20" viewBox="639 66 22 20">
 <rect x="643" y="69" width="7" height="13" fill="#000"/>
 <path d="M642.5 67.5 h5.5 l1.5 1.5 v12 h-7z" fill="#fff" stroke="#000" stroke-width="1"/>
 <rect x="644" y="72" width="4" height="7" fill="#22c040"/>
 <rect x="644" y="72" width="4" height="1" fill="#30d0f0"/>
 <rect x="645" y="74" width="2" height="2" fill="#e02020"/>
 <rect x="650" y="71" width="8" height="13" fill="#000"/>
 <path d="M648.5 69.5 h6.5 l2.5 2.5 v10.5 h-9z" fill="#eeeeee" stroke="#000" stroke-width="1"/>
 <path d="M655 69.5 v2.5 h2.5" fill="#fff" stroke="#000" stroke-width="0.8"/>
 <rect x="650" y="74" width="6" height="7" fill="#30b830"/>
 <rect x="650" y="74" width="6" height="1" fill="#30c8f0"/>
 <rect x="652" y="76" width="2" height="2" fill="#e02020"/>
 <rect x="653" y="78" width="2" height="2" fill="#e0c020"/>
</svg>
<!-- camera -->
<svg class="a" style="left:668px;top:67px" width="20" height="17" viewBox="668 67 20 17">
 <rect x="674" y="68.5" width="7.5" height="5" rx="1.5" fill="#fff"/>
 <rect x="669.5" y="71" width="17" height="11" rx="1.5" fill="#fff"/>
 <rect x="675" y="69.4" width="5.6" height="4" rx="1" fill="#2e2e2e"/>
 <rect x="670.4" y="72" width="15" height="9" rx="1" fill="#2e2e2e"/>
 <rect x="671.5" y="72.5" width="1" height="8" fill="#555"/>
 <circle cx="677.5" cy="76.5" r="2.9" fill="#fff"/>
 <circle cx="677.5" cy="76.5" r="2.3" fill="#e8e8e8"/>
 <rect x="681.5" y="74.3" width="1.5" height="1.5" fill="#00e040"/>
</svg>
<!-- gears -->
<svg class="a" style="left:696px;top:65px" width="21" height="21" viewBox="696 65 21 21">
 <g fill="none" stroke="#fff" stroke-width="2.4" stroke-linejoin="round"><path d="M709.90 73.20 L709.79 74.02 L708.27 74.42 L707.88 74.98 L708.26 76.17 L707.41 76.69 L705.95 76.16 L705.14 76.34 L704.30 77.40 L703.21 77.32 L702.65 76.16 L701.91 75.86 L700.34 76.17 L699.64 75.53 L700.33 74.42 L700.08 73.82 L698.70 73.20 L698.81 72.38 L700.33 71.98 L700.72 71.42 L700.34 70.23 L701.19 69.71 L702.65 70.24 L703.46 70.06 L704.30 69.00 L705.39 69.08 L705.95 70.24 L706.69 70.54 L708.26 70.23 L708.96 70.87 L708.27 71.98 L708.52 72.58Z"/><path d="M715.00 78.40 L714.89 79.22 L713.37 79.62 L712.98 80.18 L713.36 81.37 L712.51 81.89 L711.05 81.36 L710.24 81.54 L709.40 82.60 L708.31 82.52 L707.75 81.36 L707.01 81.06 L705.44 81.37 L704.74 80.73 L705.43 79.62 L705.18 79.02 L703.80 78.40 L703.91 77.58 L705.43 77.18 L705.82 76.62 L705.44 75.43 L706.29 74.91 L707.75 75.44 L708.56 75.26 L709.40 74.20 L710.49 74.28 L711.05 75.44 L711.79 75.74 L713.36 75.43 L714.06 76.07 L713.37 77.18 L713.62 77.78Z"/></g>
 <path d="M709.90 73.20 L709.79 74.02 L708.27 74.42 L707.88 74.98 L708.26 76.17 L707.41 76.69 L705.95 76.16 L705.14 76.34 L704.30 77.40 L703.21 77.32 L702.65 76.16 L701.91 75.86 L700.34 76.17 L699.64 75.53 L700.33 74.42 L700.08 73.82 L698.70 73.20 L698.81 72.38 L700.33 71.98 L700.72 71.42 L700.34 70.23 L701.19 69.71 L702.65 70.24 L703.46 70.06 L704.30 69.00 L705.39 69.08 L705.95 70.24 L706.69 70.54 L708.26 70.23 L708.96 70.87 L708.27 71.98 L708.52 72.58Z" fill="#e4e400" stroke="#5a5a00" stroke-width="0.9"/>
 <rect x="703.4" y="68.6" width="1.8" height="5" fill="#8a8aa8"/>
 <path d="M715.00 78.40 L714.89 79.22 L713.37 79.62 L712.98 80.18 L713.36 81.37 L712.51 81.89 L711.05 81.36 L710.24 81.54 L709.40 82.60 L708.31 82.52 L707.75 81.36 L707.01 81.06 L705.44 81.37 L704.74 80.73 L705.43 79.62 L705.18 79.02 L703.80 78.40 L703.91 77.58 L705.43 77.18 L705.82 76.62 L705.44 75.43 L706.29 74.91 L707.75 75.44 L708.56 75.26 L709.40 74.20 L710.49 74.28 L711.05 75.44 L711.79 75.74 L713.36 75.43 L714.06 76.07 L713.37 77.18 L713.62 77.78Z" fill="#e4e400" stroke="#5a5a00" stroke-width="0.9"/>
 <rect x="708.5" y="73.8" width="1.8" height="5" fill="#8a8aa8"/>
</svg>
<!-- purple download -->
<svg class="a" style="left:729px;top:64px" width="23" height="23" viewBox="729 64 23 23">
 <defs><linearGradient id="pg" x1="0" y1="0" x2="1" y2="1"><stop offset="0" stop-color="#d860e0"/><stop offset="0.5" stop-color="#b010c0"/><stop offset="1" stop-color="#800088"/></linearGradient></defs>
 <rect x="730.3" y="65.3" width="20.4" height="20.4" rx="2.5" fill="#fff"/>
 <rect x="731" y="66" width="19" height="19" rx="2" fill="url(#pg)"/>
 <rect x="739.5" y="68" width="2" height="9.5" fill="#fff"/>
 <polygon points="733.8,77 747,77 740.5,83" fill="#fff"/>
</svg>
<!-- tab: file ! -->
<svg class="a" style="left:48px;top:107px" width="18" height="18" viewBox="48 107 18 18">
 <path d="M50.3 109.3 h9.2 l3.3 3.3 v11.3 h-12.5z" fill="#000" transform="translate(0.7,0.7)"/>
 <path d="M49.7 108.7 h9.2 l3.3 3.3 v11.2 h-12.5z" fill="#ececec" stroke="#000" stroke-width="1.2"/>
 <path d="M58.9 108.7 v3.3 h3.3" fill="#fff" stroke="#000" stroke-width="0.7"/>
 <path d="M53.6 112.8 C53.6 109.6 58 109.6 58 112.8 C58 114.6 57.3 116.5 56.9 118.2 L54.7 118.2 C54.3 116.5 53.6 114.6 53.6 112.8 Z" fill="#e81ee8" stroke="#000" stroke-width="0.8"/>
 <ellipse cx="55.8" cy="121.2" rx="1.9" ry="1.2" fill="#e81ee8" stroke="#000" stroke-width="0.8"/>
</svg>
<!-- tab: yellow ! -->
<svg class="a" style="left:47px;top:125px" width="12" height="19" viewBox="47 125 12 19">
 <path d="M50 129.5 C50 126.2 55.8 126.2 55.8 129.5 C55.8 131.8 54.8 134.8 54.2 137.6 L51.6 137.6 C51 134.8 50 131.8 50 129.5 Z" fill="#000"/>
 <path d="M49.4 128.9 C49.4 125.6 55.2 125.6 55.2 128.9 C55.2 131.2 54.2 134.2 53.6 137 L51 137 C50.4 134.2 49.4 131.2 49.4 128.9 Z" fill="#e8e800" stroke="#000" stroke-width="0.9"/>
 <ellipse cx="52.8" cy="140.7" rx="2.4" ry="1.5" fill="#000"/>
 <ellipse cx="52.3" cy="140.1" rx="2.2" ry="1.4" fill="#e8e800" stroke="#000" stroke-width="0.9"/>
</svg>
<!-- tab: monitor -->
<svg class="a" style="left:185px;top:107px" width="19" height="19" viewBox="185 107 19 19">
 <defs><linearGradient id="ly" x1="0" y1="0" x2="1" y2="1"><stop offset="0" stop-color="#ffffff"/><stop offset="1" stop-color="#fff0a0"/></linearGradient></defs>
 <rect x="187.5" y="109.5" width="15" height="15" fill="#222"/>
 <rect x="186.5" y="108.5" width="15" height="15" fill="url(#ly)" stroke="#000" stroke-width="1.2"/>
 <rect x="187" y="116" width="3" height="7" fill="#00e000"/>
 <rect x="190" y="119" width="2" height="4" fill="#4848ff"/>
 <rect x="192" y="120" width="1" height="3" fill="#00e000"/>
 <rect x="193" y="115" width="1.5" height="8" fill="#4848ff"/>
 <rect x="194.5" y="116" width="2.5" height="7" fill="#00e000"/>
 <rect x="197" y="118" width="2" height="5" fill="#4848ff"/>
 <rect x="199" y="119" width="2" height="4" fill="#00e000"/>
</svg>
<!-- tab: info i -->
<svg class="a" style="left:171px;top:127px" width="12" height="18" viewBox="171 127 12 18">
 <ellipse cx="177.2" cy="130.4" rx="2.5" ry="1.9" fill="#28b8ff" stroke="#000" stroke-width="1"/>
 <path d="M173.2 133.8 H178.9 V141.5 H180.6 V143.6 H172.7 V141.5 H174.3 V135.8 H173.2 Z" fill="#1464f0" stroke="#000" stroke-width="1"/>
</svg>
<!-- tab: speaker -->
<svg class="a" style="left:339px;top:106px" width="20" height="19" viewBox="339 106 20 19">
 <path d="M341.6 113.3 h3.4 l6.3 -4.6 v13.8 l-6.3 -4.6 h-3.4 c-0.6 0 -0.9 -0.6 -0.9 -2.3 c0 -1.7 0.3 -2.3 0.9 -2.3z" fill="#ecec00" stroke="#000" stroke-width="1.3" stroke-linejoin="round"/>
 <path d="M349.2 110.5 v10.2" stroke="#6a6a00" stroke-width="0.8"/>
 <circle cx="347.6" cy="115.6" r="0.8" fill="#777"/>
 <path d="M353 112.3 q1.5 3.3 0 6.6" fill="none" stroke="#000" stroke-width="1.1"/>
 <path d="M355.2 110.6 q2.4 5 0 10" fill="none" stroke="#000" stroke-width="1.1"/>
</svg>
<!-- tab: red cross -->
<svg class="a" style="left:301px;top:127px" width="19" height="19" viewBox="301 127 19 19">
 <path d="M307.5 129 h5.5 v4.5 h4.5 v5.5 h-4.5 v4.5 h-5.5 v-4.5 h-4.5 v-5.5 h4.5z" fill="#000" transform="translate(0.8,0.8)"/>
 <path d="M307 128.5 h5.5 v4.5 h4.5 v5.5 h-4.5 v4.5 h-5.5 v-4.5 h-4.5 v-5.5 h4.5z" fill="#e82020" stroke="#000" stroke-width="1"/>
</svg>
<!-- tab: magnifier -->
<svg class="a" style="left:415px;top:127px" width="20" height="18" viewBox="415 127 20 18">
 <path d="M426 137 l6 5.5" stroke="#000" stroke-width="4" stroke-linecap="round"/>
 <path d="M426.3 137.3 l5.5 5" stroke="#1010d0" stroke-width="2.2" stroke-linecap="round"/>
 <circle cx="421.8" cy="132.5" r="4.9" fill="#30d830" stroke="#000" stroke-width="1"/>
 <path d="M420 131 l1 -1 M422 134 l1.2 -1.2" stroke="#c0ffc0" stroke-width="0.7"/>
</svg>
<!-- tab: random access -->
<svg class="a" style="left:488px;top:107px" width="19" height="19" viewBox="488 107 19 19">
 <rect x="490.5" y="109.5" width="15" height="15" fill="#222"/>
 <rect x="489.7" y="108.7" width="14.6" height="14.6" fill="url(#ly)" stroke="#000" stroke-width="1.2"/>
 <g fill="#0000ff"><rect x="492" y="114.8" width="1.2" height="1.2"/><rect x="491" y="116.8" width="1.2" height="1.2"/><rect x="494" y="117.8" width="1.2" height="1.2"/><rect x="496" y="114.8" width="1.2" height="1.2"/><rect x="498" y="113.3" width="1.2" height="1.2"/><rect x="500" y="112.3" width="1.2" height="1.2"/><rect x="500" y="114.3" width="1.2" height="1.2"/></g>
 <g fill="#ff0000"><rect x="492" y="117.8" width="1.2" height="1.2"/><rect x="492" y="119.8" width="1.2" height="1.2"/><rect x="491" y="121.8" width="1.2" height="1.2"/><rect x="496" y="116.8" width="1.2" height="1.2"/><rect x="496" y="119.8" width="1.2" height="1.2"/><rect x="498" y="118.8" width="1.2" height="1.2"/><rect x="500" y="116.8" width="1.2" height="1.2"/><rect x="501" y="118.8" width="1.2" height="1.2"/></g>
</svg>
<!-- tab: folder -->
<svg class="a" style="left:555px;top:127px" width="18" height="18" viewBox="555 127 18 18">
 <defs><linearGradient id="fy" x1="0" y1="0" x2="1" y2="1"><stop offset="0" stop-color="#f0d020"/><stop offset="1" stop-color="#d8a000"/></linearGradient></defs>
 <path d="M556.8 129.5 h4.5 l1.2 1.6 h7 v12 h-12.7z" fill="#000" transform="translate(0.8,0.8)"/>
 <path d="M556.5 129 h4.5 l1.2 1.6 h7 v12.4 h-12.7z" fill="#f8e040" stroke="#000" stroke-width="1"/>
 <rect x="558.5" y="132.5" width="11.5" height="10.5" fill="url(#fy)" stroke="#000" stroke-width="1"/>
 <rect x="568" y="133" width="0.8" height="9.5" fill="#b0b0b0"/>
</svg>
<!-- tab: additional tests -->
<svg class="a" style="left:654px;top:107px" width="19" height="19" viewBox="654 107 19 19">
 <rect x="656.5" y="109.5" width="15" height="15" fill="#222"/>
 <rect x="655.7" y="108.7" width="14.6" height="14.6" fill="url(#ly)" stroke="#000" stroke-width="1.2"/>
 <rect x="656.3" y="115" width="1.8" height="8" fill="#00e000"/>
 <rect x="658.1" y="118" width="1.6" height="5" fill="#4040ff"/>
 <rect x="659.7" y="119" width="0.8" height="4" fill="#00e000"/>
 <rect x="661" y="115" width="9" height="8.5" fill="#000"/>
 <rect x="661.8" y="116" width="8" height="6.8" fill="#f4f4f4"/>
 <rect x="661.8" y="116" width="8" height="1" fill="#0000ff"/>
 <g fill="#f00"><rect x="662.5" y="117.8" width="1" height="1"/><rect x="666.5" y="117.8" width="1" height="1"/><rect x="664.5" y="119.6" width="1" height="1"/><rect x="666.5" y="119.6" width="1" height="1"/><rect x="662.5" y="121.4" width="1" height="1"/><rect x="664.5" y="121.4" width="1" height="1"/></g>
 <g fill="#00f"><rect x="664.5" y="117.8" width="1" height="1"/><rect x="666.5" y="121.4" width="1" height="1"/></g>
 <rect x="662.5" y="119.6" width="1" height="1" fill="#0a0"/>
</svg>
<!-- tab: trash -->
<svg class="a" style="left:734px;top:127px" width="17" height="18" viewBox="734 127 17 18">
 <defs><linearGradient id="tg" x1="0" y1="0" x2="1" y2="0"><stop offset="0" stop-color="#606060"/><stop offset="0.3" stop-color="#f0f0f0"/><stop offset="0.5" stop-color="#909090"/><stop offset="0.8" stop-color="#202020"/><stop offset="1" stop-color="#707070"/></linearGradient></defs>
 <path d="M740.5 128.5 h3.5 v1 h4.5 v2.5 h-1 v11 h-10 v-11 h-1 v-2.5 h4z" fill="#000"/>
 <rect x="737.6" y="130.5" width="9.6" height="1" fill="#c8c8c8"/>
 <rect x="738" y="132" width="8.7" height="10.2" fill="url(#tg)"/>
</svg>
<!-- checkmarks -->
<svg class="a" style="left:671px;top:286px" width="13" height="13" viewBox="0 0 13 13"><path d="M2.3 7 L5.2 9.8 L11 3.6" fill="none" stroke="#383838" stroke-width="1.15"/></svg>
<svg class="a" style="left:671px;top:411px" width="13" height="13" viewBox="0 0 13 13"><path d="M2.3 7 L5.2 9.8 L11 3.6" fill="none" stroke="#383838" stroke-width="1.15"/></svg>
<svg class="a" style="left:671px;top:445px" width="13" height="13" viewBox="0 0 13 13"><path d="M2.3 7 L5.2 9.8 L11 3.6" fill="none" stroke="#383838" stroke-width="1.15"/></svg>
<!-- spinner arrows -->
<svg class="a" style="left:715px;top:258px" width="17" height="18" viewBox="715 258 17 18">
 <rect x="715" y="258" width="17" height="18" fill="#f0f0f0"/>
 <rect x="716" y="259" width="15" height="8" fill="#e6e6e6" stroke="#d0d0d0" stroke-width="1"/>
 <rect x="716" y="267.5" width="15" height="8" fill="#e6e6e6" stroke="#d0d0d0" stroke-width="1"/>
 <polygon points="720.5,264.5 726.5,264.5 723.5,261.5" fill="#606060"/>
 <polygon points="720.5,269.5 726.5,269.5 723.5,272.5" fill="#606060"/>
</svg>

<div class="tx" style="left:40.25px;top:14.7px;font-size:12px;font-weight:400;color:#000;transform:scaleX(0.9486)">HD Tune Pro 5.60 - утилита для HD/SSD</div>
<div class="tx" style="left:17.19px;top:39.8px;font-size:12px;font-weight:400;color:#000;transform:scaleX(1.0107)">Файл</div>
<div class="tx" style="left:64.11px;top:39.8px;font-size:12px;font-weight:400;color:#000;transform:scaleX(0.9891)">Справка</div>
<div class="tx" style="left:26.20px;top:68.9px;font-size:11px;font-weight:400;color:#000;transform:scaleX(0.9891)">ADATA&nbsp;&nbsp; HD720 (1000 gB)</div>
<div class="tx" style="left:503.54px;top:69.5px;font-size:12px;font-weight:700;color:#000;transform:scaleX(1.0560)">38°C</div>
<div class="tx" style="left:783.32px;top:68.4px;font-size:11px;font-weight:400;color:#000;transform:scaleX(0.9813)">Выход</div>
<div class="tx" style="left:73.00px;top:110.0px;font-size:11px;font-weight:400;color:#000;transform:scaleX(0.9661)">Тест в файл</div>
<div class="tx" style="left:208.38px;top:110.0px;font-size:11px;font-weight:400;color:#000;transform:scaleX(1.0234)">Монитор Диска</div>
<div class="tx" style="left:364.40px;top:110.0px;font-size:11px;font-weight:400;color:#000;transform:scaleX(0.9890)">Уровень шума</div>
<div class="tx" style="left:511.23px;top:110.0px;font-size:11px;font-weight:400;color:#000;transform:scaleX(0.9681)">Случайный доступ</div>
<div class="tx" style="left:678.20px;top:110.0px;font-size:11px;font-weight:400;color:#000;transform:scaleX(1.0098)">Дополнительные&nbsp; тесты</div>
<div class="tx" style="left:68.30px;top:127.9px;font-size:11px;font-weight:400;color:#000;transform:scaleX(1.0109)">Тест диска</div>
<div class="tx" style="left:191.42px;top:129.7px;font-size:11px;font-weight:400;color:#000;transform:scaleX(0.9788)">Информация</div>
<div class="tx" style="left:323.90px;top:129.7px;font-size:11px;font-weight:400;color:#000;transform:scaleX(1.0000)">Здоровье</div>
<div class="tx" style="left:440.01px;top:129.7px;font-size:11px;font-weight:400;color:#000;transform:scaleX(0.9944)">Поиск ошибок</div>
<div class="tx" style="left:578.49px;top:129.7px;font-size:11px;font-weight:400;color:#000;transform:scaleX(1.0118)">Использование папок</div>
<div class="tx" style="left:756.81px;top:129.7px;font-size:11px;font-weight:400;color:#000;transform:scaleX(0.9875)">Стирание</div>
<div class="tx" style="left:728.29px;top:163.8px;font-size:11px;font-weight:400;color:#000;transform:scaleX(1.0103)">Старт</div>
<div class="tx" style="left:686.59px;top:196.0px;font-size:11px;font-weight:400;color:#000;transform:scaleX(1.0114)">Чтение</div>
<div class="tx" style="left:686.59px;top:211.8px;font-size:11px;font-weight:400;color:#000;transform:scaleX(1.0114)">Запись</div>
<div class="tx" style="left:686.29px;top:237.4px;font-size:11px;font-weight:400;color:#000;transform:scaleX(1.0132)">Короткий шаг</div>
<div class="tx" style="left:674.20px;top:259.7px;font-size:11px;font-weight:400;color:#9a9a9a;transform:scaleX(0.9833)">40</div>
<div class="tx" style="left:743.40px;top:260.0px;font-size:11px;font-weight:400;color:#000;transform:scaleX(1.0154)">gB</div>
<div class="tx" style="left:685.90px;top:285.4px;font-size:11px;font-weight:400;color:#000;transform:scaleX(0.9955)">Скорость обмена</div>
<div class="tx" style="left:671.01px;top:304.1px;font-size:11px;font-weight:400;color:#000;transform:scaleX(0.9851)">Минимум</div>
<div class="tx" style="left:716.31px;top:320.1px;font-size:12px;font-weight:700;color:#12bcff;transform:scaleX(1.0889)">55.6 MB/s</div>
<div class="tx" style="left:670.98px;top:337.1px;font-size:11px;font-weight:400;color:#000;transform:scaleX(1.0196)">Максимум</div>
<div class="tx" style="left:714.42px;top:352.1px;font-size:12px;font-weight:700;color:#12bcff;transform:scaleX(1.0750)">115.8 MB/s</div>
<div class="tx" style="left:670.02px;top:366.8px;font-size:11px;font-weight:400;color:#000;transform:scaleX(0.9767)">Средняя</div>
<div class="tx" style="left:717.40px;top:382.7px;font-size:12px;font-weight:700;color:#12bcff;transform:scaleX(1.0691)">90.6 MB/s</div>
<div class="tx" style="left:686.82px;top:411.1px;font-size:11px;font-weight:400;color:#000;transform:scaleX(0.9763)">Время доступа</div>
<div class="tx" style="left:725.81px;top:426.7px;font-size:12px;font-weight:700;color:#f0f000;transform:scaleX(0.9884)">17.4 ms</div>
<div class="tx" style="left:686.77px;top:445.0px;font-size:11px;font-weight:400;color:#000;transform:scaleX(1.0256)">Пиковая скорость</div>
<div class="tx" style="left:720.00px;top:461.0px;font-size:12px;font-weight:700;color:#fff;transform:scaleX(1.1043)">5.6 MB/s</div>
<div class="tx" style="left:670.27px;top:477.7px;font-size:11px;font-weight:400;color:#000;transform:scaleX(1.0333)">Загрузка CPU</div>
<div class="tx" style="left:733.41px;top:493.3px;font-size:12px;font-weight:700;color:#fff;transform:scaleX(0.9885)">1.5%</div>
<div class="tx" style="left:58.43px;top:163.7px;font-size:11px;font-weight:400;color:#000;transform:scaleX(0.9708)">MB/s</div>
<div class="tx" style="left:620.66px;top:164.0px;font-size:11px;font-weight:400;color:#000;transform:scaleX(0.9357)">ms</div>
</body></html>
